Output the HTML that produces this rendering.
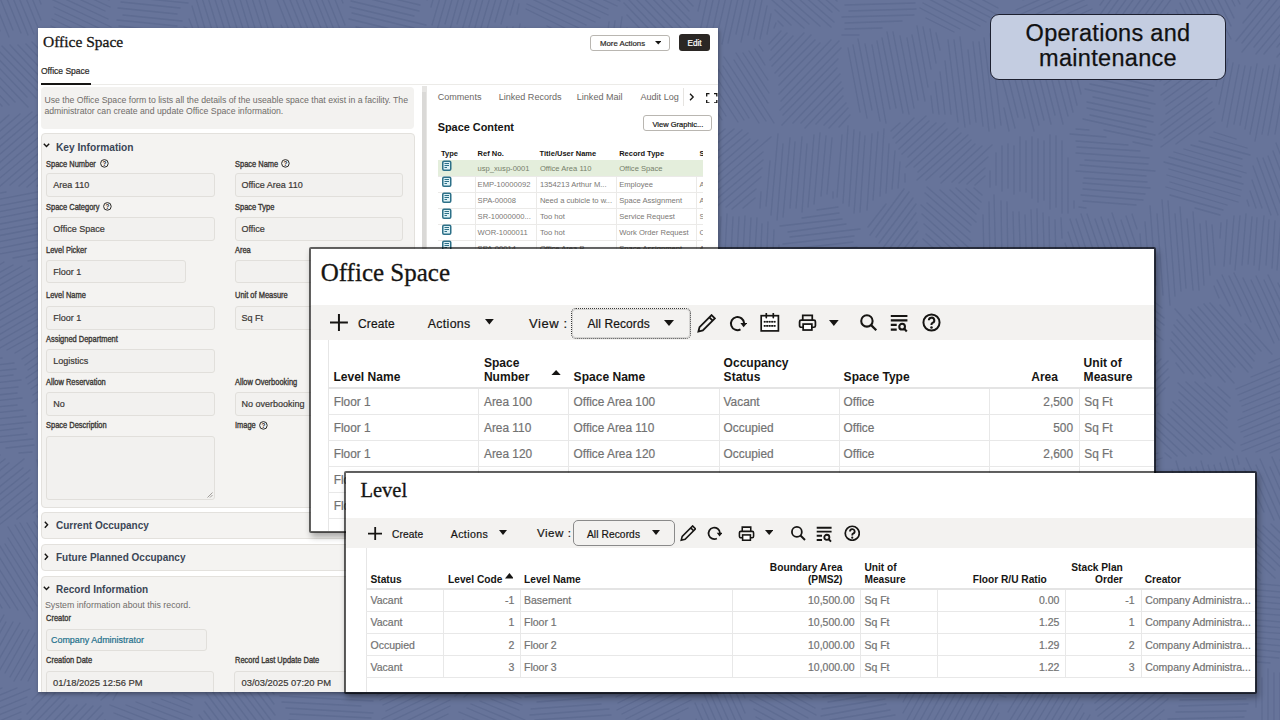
<!DOCTYPE html>
<html><head><meta charset="utf-8">
<style>
*{box-sizing:border-box;margin:0;padding:0}
html,body{width:1280px;height:720px;overflow:hidden}
body{background:#67749a;font-family:"Liberation Sans",sans-serif;position:relative;color:#161513}
.a{position:absolute;white-space:nowrap}
#tbox{left:990px;top:14px;width:236px;height:66px;background:#c4cde1;border:1px solid #1d2030;border-radius:9px;text-align:center;font-size:23.5px;line-height:24.5px;padding-top:6px;color:#111;letter-spacing:0.3px;-webkit-text-stroke:0.25px #111}
.win{position:absolute;background:#fff;overflow:hidden}
#w1{left:38px;top:28px;width:680px;height:664px;box-shadow:1px 2px 4px rgba(0,0,0,.35)}
#w2{left:309px;top:247px;width:847px;height:286px;border:2px solid rgba(0,0,0,.6);background-clip:padding-box;border-radius:2px;box-shadow:2px 4px 6px rgba(0,0,0,.3)}
#w3{left:344px;top:471px;width:913px;height:223px;border:2px solid rgba(0,0,0,.62);background-clip:padding-box;border-radius:2px;box-shadow:2px 4px 6px rgba(0,0,0,.3)}
.inp{background:#f2f1ef;border:1px solid #e2e0dc;border-radius:3px}
.card{background:#f4f3f1;border:1px solid #e6e4e0;border-radius:4px}

</style></head><body>
<svg class="a" style="left:0;top:0" width="1280" height="720"><path d="M32 -19L41 4M22 -26L41 20M15 -29L41 35M9 -26L34 34M-0 -34L28 35M-8 -38L21 33M-11 -29L13 30M-19 -31L9 37M-23 -26L0 31M-27 -20L-6 30M-31 -14L-11 34M-35 -9L-18 34M-42 -8L-23 38M-44 2L-29 38M-44 17L-35 39M-44 34L-41 41M97 -26L104 -23M90 -22L106 -15M79 -21L107 -8M72 -18L109 -0M63 -15L110 7M53 -13L105 11M46 -10L108 19M49 -2L111 27M54 7L116 36M55 14L109 39M52 19L109 46M51 26L95 46M51 32L88 49M52 39L75 50M52 46L68 53M163 -30L189 -27M135 -26L187 -21M115 -22L183 -15M115 -16L179 -10M117 -10L186 -3M117 -4L188 3M121 2L180 8M118 8L177 14M123 15L182 21M117 20L177 26M119 26L163 31M122 33L148 35M122 39L137 40M123 45L127 45M263 -27L270 -4M257 -25L279 45M253 -20L271 38M244 -27L266 42M240 -20L259 41M233 -24L253 42M226 -24L247 41M219 -28L241 41M212 -29L231 31M204 -35L227 37M201 -25L219 33M197 -18L213 33M195 -5L206 32M192 6L200 33M189 19L193 29M332 -40L337 -29M326 -39L343 3M323 -31L345 25M313 -38L344 39M307 -37L341 47M305 -28L337 52M295 -36L331 53M288 -37L324 53M284 -31L317 52M278 -30L309 47M273 -25L301 43M276 -3L296 48M281 25L290 47M363 -46L411 -34M346 -44L409 -28M339 -39L413 -21M350 -30L410 -16M340 -27L415 -8M346 -19L413 -3M344 -13L420 5M354 -5L419 11M351 1L414 16M350 7L426 25M352 13L414 28M349 19L399 31M356 27L387 34M354 32L377 38M354 38L365 41M519 4L517 14M524 -33L510 15M518 -34L501 24M511 -33L495 22M507 -39L487 29M499 -33L480 31M494 -40L474 31M488 -37L469 27M482 -38L461 34M475 -36L457 24M471 -46L449 33M465 -46L445 24M457 -38L437 30M453 -46L432 25M446 -47L431 7M442 -52L427 0M435 -50L425 -16M427 -45L423 -29M592 -32L612 -22M575 -34L621 -12M556 -36L617 -7M542 -36L620 1M540 -30L617 6M534 -27L608 9M533 -20L608 15M528 -16L600 18M526 -10L595 22M526 -4L586 25M527 4L579 28M526 9L577 34M547 26L568 36M689 -33L696 -26M683 -30L694 -19M679 -26L695 -9M673 -24L694 -1M664 -24L693 6M661 -19L689 11M652 -19L690 20M648 -14L693 32M647 -7L688 35M634 -12L685 41M627 -10L692 56M628 -1L679 52M624 3L676 57M627 15L669 59M776 23L774 28M771 14L767 34M767 6L760 39M763 -5L754 39M759 -15L748 35M755 -22L741 42M752 -39L736 34M746 -37L728 43M739 -35L722 44M735 -42L716 40M728 -40L709 47M722 -40L702 49M716 -42L696 50M709 -36L698 11M703 -39L700 -23M813 -60L841 -35M805 -59L838 -30M797 -58L839 -21M791 -55L839 -13M778 -59L834 -10M777 -52L837 1M767 -52L839 11M761 -50L832 12M759 -43L834 22M767 -29L831 27M765 -22L820 26M768 -12L809 24M772 -0L804 28M775 10L791 25M778 21L783 26M859 35L842 35M882 28L845 29M902 21L845 23M914 15L842 17M916 9L849 11M915 3L845 5M912 -3L844 -1M915 -9L854 -7M910 -15L847 -13M906 -21L845 -19M911 -27L855 -25M904 -33L852 -31M911 -39L849 -37M910 -45L862 -44M907 -51L880 -50M904 -57L898 -57M997 -33L1008 -27M981 -35L1008 -20M969 -34L1004 -16M953 -36L1002 -10M933 -40L1005 -2M924 -38L994 -1M927 -30L998 8M923 -25L1005 19M928 -15L999 22M919 -13L986 22M927 -2L980 26M923 3L975 30M920 8L960 29M926 18L954 32M1092 42L1087 44M1092 35L1079 41M1092 29L1071 38M1090 23L1065 34M1089 17L1059 30M1092 9L1048 29M1087 5L1042 25M1095 -5L1030 24M1085 -8L1028 18M1096 -19L1019 15M1091 -23L1016 10M1085 -28L1023 0M1097 -39L1013 -2M1093 -44L1023 -13M1087 -48L1021 -18M1082 -52L1015 -22M1042 -41L1013 -28M1168 23L1155 42M1168 13L1149 40M1175 -6L1141 40M1174 -15L1132 43M1180 -33L1124 44M1172 -32L1119 40M1166 -35L1111 41M1159 -36L1102 43M1151 -35L1105 29M1150 -44L1100 25M1143 -44L1099 16M1136 -45L1100 5M1130 -46L1101 -6M1123 -47L1103 -20M1117 -49L1103 -29M1109 -48L1102 -39M1249 -45L1253 -38M1240 -50L1250 -30M1232 -53L1246 -26M1227 -48L1243 -18M1222 -46L1243 -4M1217 -41L1240 4M1212 -39L1235 6M1206 -38L1234 18M1198 -40L1231 26M1193 -36L1231 39M1187 -35L1224 39M1189 -18L1224 52M1181 -20L1218 53M1180 -10L1213 56M1180 3L1205 53M1176 10L1198 52M1175 20L1189 48M1171 27L1180 45M1169 36L1172 42M1312 52L1307 59M1317 37L1300 57M1317 27L1295 55M1320 14L1285 57M1315 11L1277 57M1319 -4L1277 47M1322 -16L1264 54M1319 -22L1256 54M1310 -20L1254 47M1305 -24L1242 52M1293 -20L1242 43M1290 -25L1236 41M1285 -28L1243 23M1280 -32L1247 8M1274 -34L1248 -2M1269 -38L1251 -15M1262 -38L1254 -29M41 42L51 53M32 42L52 62M26 44L51 70M18 45L46 74M10 45L42 79M2 46L43 88M-7 45L37 90M-14 46L36 98M-21 47L27 97M-24 53L28 107M-31 54L15 102M-45 49L9 105M-47 54L2 106M-49 61L-4 108M-50 69L-12 108M-42 86L-20 109M-38 99L-25 113M111 49L122 50M81 55L119 56M65 60L124 62M65 66L125 68M65 72L129 74M55 78L122 80M57 84L131 86M56 90L130 92M56 96L126 98M58 102L136 104M61 108L123 110M99 115L123 116M184 27L187 28M177 31L191 36M169 35L195 43M160 39L195 50M149 41L195 56M143 46L192 61M139 51L198 70M130 54L195 75M138 63L194 81M137 69L193 87M140 76L198 95M135 81L197 101M144 90L192 105M138 95L188 110M142 102L181 115M280 51L277 60M274 51L266 77M266 55L255 94M261 52L247 102M255 51L241 99M249 48L233 106M242 53L228 104M236 52L222 100M231 48L215 104M224 50L209 103M218 50L206 91M213 43L203 81M207 44L201 64M202 40L199 49M331 61L339 69M323 61L340 77M310 57L342 88M302 58L339 93M289 53L342 105M291 63L338 109M282 63L332 112M279 69L324 113M274 72L326 123M271 77L317 123M269 84L311 125M271 94L306 129M263 94L309 139M260 100L297 137M260 108L299 147M256 113L289 145M264 130L287 152M279 153L284 158M433 34L438 45M424 30L436 55M421 37L434 64M414 36L431 71M408 37L428 80M405 45L429 95M396 41L428 108M394 50L425 115M383 41L414 106M380 49L408 108M375 51L404 114M365 46L395 108M359 47L388 108M357 56L381 106M352 59L376 111M346 60L366 103M345 72L361 107M348 94L354 107M473 40L487 49M463 41L487 56M453 42L492 66M443 43L492 72M450 55L500 85M448 60L502 92M444 65L501 99M445 72L499 105M444 79L500 112M443 85L493 115M439 90L489 119M438 96L483 123M435 102L479 127M435 109L472 130M436 116L463 132M435 122L459 137M443 134L455 141M576 89L573 105M572 76L566 110M568 62L560 109M564 50L553 112M558 49L546 118M553 44L540 116M548 38L536 109M543 31L528 115M536 36L524 103M531 31L518 108M525 28L512 107M520 24L509 89M513 27L504 80M507 27L500 67M500 32L496 57M494 36L491 48M675 72L671 100M669 70L664 110M664 65L658 110M659 60L652 110M654 51L646 110M648 49L640 109M642 45L634 109M637 37L628 107M632 31L622 106M627 28L616 105M622 17L610 104M615 21L604 104M609 22L599 99M601 36L592 102M596 30L587 97M590 33L582 88M583 36L578 75M576 41L574 57M759 45L763 51M755 49L765 65M749 51L768 80M743 53L769 93M736 53L768 103M734 60L774 123M724 57L766 121M723 66L759 123M716 66L749 118M709 66L744 120M699 62L738 122M696 68L726 116M690 69L722 120M684 71L713 116M683 81L705 115M680 87L698 116M679 97L691 116M675 103L684 115M850 115L839 127M848 108L829 128M846 103L824 125M843 96L816 124M843 88L805 128M841 82L801 123M840 74L793 123M837 68L782 125M838 59L783 115M841 48L780 110M839 41L781 101M831 40L779 94M820 43L779 85M815 40L779 76M811 35L775 73M804 33L772 66M793 36L770 60M787 33L771 50M781 31L769 44M936 33L940 50M930 29L936 63M923 27L931 69M917 26L928 87M912 35L925 101M907 38L918 100M900 36L914 108M893 32L909 114M887 32L903 113M882 38L896 108M877 41L890 109M872 45L886 123M865 44L880 121M858 39L872 110M853 45L867 118M848 48L860 112M990 34L1001 125M984 38L995 128M979 42L989 131M973 42L983 126M968 50L976 122M960 37L970 124M954 40L965 127M948 40L958 122M945 61L951 114M940 72L945 114M935 82L939 114M931 96L933 113M1088 49L1089 55M1081 47L1086 67M1075 47L1083 78M1069 47L1081 94M1061 41L1077 105M1055 40L1073 112M1050 48L1068 116M1040 32L1063 124M1036 41L1055 115M1029 36L1051 124M1021 30L1044 120M1016 36L1039 125M1008 26L1034 131M1002 29L1025 118M999 40L1018 117M995 51L1015 128M1004 108L1009 131M1146 47L1156 49M1125 49L1155 55M1099 49L1149 60M1097 55L1150 66M1097 61L1156 74M1093 66L1156 80M1091 72L1154 86M1092 78L1153 91M1090 84L1148 96M1085 89L1155 104M1093 97L1150 109M1087 102L1153 116M1087 108L1153 122M1090 115L1146 127M1083 119L1155 135M1104 130L1152 140M1133 142L1152 146M1215 122L1199 134M1211 118L1176 144M1214 109L1161 147M1212 102L1164 138M1207 98L1159 134M1212 88L1161 125M1208 83L1166 114M1204 79L1166 106M1205 70L1164 100M1205 63L1161 95M1200 59L1164 85M1193 57L1160 81M1186 54L1161 73M1179 52L1160 66M1174 48L1162 57M1167 46L1161 51M1314 85L1311 103M1310 77L1302 116M1306 65L1294 127M1300 66L1288 128M1294 63L1282 130M1287 66L1275 134M1281 65L1268 135M1275 65L1262 134M1269 66L1255 141M1263 69L1250 134M1257 64L1245 129M1251 67L1240 125M1245 66L1234 124M1239 65L1227 127M1233 63L1222 121M1228 59L1219 104M1221 61L1216 86M1215 62L1214 67M59 183L56 186M56 178L46 186M56 170L37 186M53 165L27 187M50 159L19 186M48 153L10 185M45 148L-1 187M43 142L-6 183M40 136L-22 189M35 132L-25 184M41 119L-36 185M37 115L-36 177M32 112L-40 173M20 114L-35 161M9 115L-43 160M-1 116L-43 151M-9 115L-39 141M-21 117L-37 131M116 121L119 128M110 123L118 139M102 121L115 148M95 119L113 157M90 123L110 165M83 122L111 182M74 117L107 186M69 121L101 187M61 117L91 181M51 111L87 187M50 123L77 180M55 147L75 189M60 171L67 187M158 117L180 128M142 115L180 135M138 120L179 141M132 123L174 145M125 126L180 155M127 134L177 160M125 140L174 166M124 146L177 174M123 153L177 181M122 159L180 189M119 164L174 193M118 170L161 193M116 176L157 197M117 183L147 199M114 188L138 201M280 162L280 175M274 157L273 190M268 147L267 195M262 137L261 195M256 127L255 202M250 126L249 198M244 117L243 193M238 118L237 198M232 112L231 194M226 112L225 201M220 122L219 193M214 122L213 195M208 111L207 205M202 115L201 201M196 126L195 199M190 121L189 193M345 115L352 115M339 120L352 121M331 126L353 127M327 132L357 133M321 138L354 139M314 143L360 145M310 149L356 151M298 155L366 158M298 161L361 163M288 166L364 169M288 172L362 175M288 178L374 182M283 184L373 188M302 191L370 194M315 197L359 199M332 204L361 205M445 170L438 175M443 164L420 179M443 157L406 181M441 152L388 185M440 145L382 181M438 139L380 176M429 138L384 166M431 130L380 161M426 125L374 158M421 121L377 149M412 120L371 146M399 121L367 141M391 119L364 136M383 117L364 129M374 116L361 124M365 114L358 118M540 124L546 131M529 121L544 139M521 120L542 145M509 115L539 152M505 120L542 164M504 128L538 168M499 131L541 181M492 132L536 185M486 134L535 193M484 142L534 201M480 146L530 205M474 147L522 206M464 146L518 210M461 152L511 211M452 149L492 197M455 162L482 195M452 168L464 183M621 117L631 122M585 109L624 125M578 112L627 133M574 118L619 136M569 122L621 143M562 126L612 146M553 128L614 154M552 134L616 161M551 140L611 165M549 146L605 169M552 154L605 176M550 159L604 182M554 167L601 187M552 173L600 193M551 179L594 197M548 185L595 204M550 192L588 208M549 198L565 205M668 115L675 121M662 117L676 130M653 117L678 141M650 122L677 148M643 124L680 160M637 126L681 170M636 134L680 177M636 142L677 181M634 148L675 189M630 153L666 188M627 158L661 192M622 162L652 191M618 166L649 196M617 174L640 196M614 179L634 199M611 185L630 203M609 191L623 204M607 198L616 207M603 202L610 209M601 209L605 212M755 198L743 208M756 189L732 209M761 177L726 207M762 168L715 208M763 160L707 207M763 152L710 197M771 137L702 196M758 140L706 185M750 139L698 184M748 133L694 178M742 130L693 172M734 129L689 167M725 129L687 161M717 127L689 152M709 126L688 144M702 125L685 139M695 123L682 134M688 121L680 127M833 192L833 198M832 138L827 194M826 136L821 196M820 133L814 204M814 135L808 207M807 144L802 212M802 137L796 208M795 142L790 208M790 138L783 217M783 144L777 220M778 134L771 215M770 161L766 206M761 192L760 208M905 174L905 182M900 162L898 188M895 151L892 189M889 144L886 193M884 129L880 196M878 132L873 200M872 134L867 210M865 136L860 212M860 132L854 213M854 130L849 206M848 126L843 203M842 135L837 197M985 176L975 185M985 168L967 184M988 157L959 183M992 145L952 182M982 146L941 183M975 144L940 177M971 140L926 180M968 135L917 180M961 133L918 172M958 128L914 167M947 129L906 167M945 123L908 157M936 123L902 154M929 121L899 149M926 116L896 143M914 118L893 138M900 123L891 131M1074 201L1074 208M1068 158L1068 213M1062 141L1062 213M1056 136L1056 207M1050 135L1050 209M1044 141L1044 200M1038 139L1038 202M1032 137L1032 198M1026 141L1026 192M1020 137L1020 191M1014 146L1014 194M1008 144L1008 188M1002 146L1002 191M996 153L996 185M990 171L990 187M1076 129L1089 130M1070 134L1106 137M1076 141L1128 145M1077 147L1140 151M1076 153L1149 158M1085 160L1148 164M1080 165L1155 171M1076 171L1146 176M1084 178L1147 182M1083 183L1150 188M1083 189L1145 194M1081 195L1143 200M1083 201L1136 205M1079 207L1086 208M1214 132L1236 139M1210 137L1247 148M1199 141L1250 155M1191 145L1242 159M1184 149L1242 166M1174 152L1246 173M1169 157L1241 177M1164 162L1243 184M1169 169L1241 190M1167 175L1240 196M1170 182L1238 202M1166 187L1227 205M1170 195L1223 210M1195 208L1220 215M1323 182L1325 188M1300 139L1318 186M1294 139L1314 192M1287 137L1308 194M1284 146L1307 207M1276 143L1301 207M1273 151L1298 217M1268 156L1292 219M1263 158L1284 213M1257 158L1278 215M1253 166L1271 215M1252 180L1262 208M1250 191L1256 208M1247 200L1249 206M39 259L28 261M39 253L13 258M40 247L-1 254M41 240L-20 252M45 233L-23 246M39 228L-34 242M43 222L-34 236M53 214L-37 231M49 208L-38 225M55 201L-43 220M56 195L-34 212M53 189L-41 207M6 192L-45 202M-31 193L-41 195M112 261L45 262M114 255L51 256M121 249L53 250M114 243L59 244M120 237L52 238M116 231L64 232M121 225L57 226M121 219L64 220M123 213L62 214M125 206L63 208M118 201L64 202M102 195L64 196M187 291L184 293M189 279L176 294M191 267L169 292M193 256L161 293M193 247L156 290M199 231L148 290M205 215L148 280M196 216L144 276M195 208L142 270M191 203L134 269M186 200L127 268M175 204L125 261M169 202L127 249M157 206L128 239M150 204L132 226M140 207L131 217M221 303L206 304M224 297L199 298M228 291L190 292M238 285L196 286M240 279L195 280M250 272L199 274M255 266L203 268M259 260L205 262M267 254L204 256M269 248L209 250M263 242L204 244M258 236L210 238M263 230L213 231M262 224L215 225M261 218L217 219M262 212L216 213M353 215L356 218M343 211L360 233M333 208L361 245M324 206L366 260M315 205L364 268M311 209L357 268M299 203L350 269M291 202L349 278M278 196L339 274M275 201L335 279M277 214L321 271M269 213L317 276M273 228L307 272M272 236L297 270M276 252L286 265M417 275L412 278M418 267L405 276M420 259L397 273M424 250L392 269M424 243L385 266M422 237L380 262M426 228L379 256M427 220L379 249M426 213L369 248M435 201L371 240M437 193L367 235M432 189L363 230M437 179L370 219M419 183L362 217M397 189L367 207M384 190L378 194M501 212L514 227M480 198L511 233M464 189L508 238M449 181L510 250M445 185L503 251M450 200L493 248M446 205L489 253M440 208L487 260M443 220L477 258M438 223L474 263M439 233L467 265M433 236L464 271M432 243L460 275M430 250L456 279M426 255L449 280M426 264L444 284M423 269L440 289M422 277L434 290M625 265L626 276M618 254L620 276M611 242L615 280M604 224L608 278M597 222L603 280M591 217L597 290M585 214L591 283M579 222L585 290M573 221L579 290M567 215L573 288M560 211L567 292M554 211L561 293M548 214L556 295M543 219L550 295M537 218L543 284M531 218L536 277M525 224L529 266M520 236L522 257M683 192L693 196M675 195L699 205M666 198L701 212M660 202L698 217M647 203L695 222M642 208L693 228M636 212L693 235M629 216L685 238M620 218L688 246M613 222L688 252M619 231L678 254M616 236L678 261M625 246L683 269M631 255L677 273M629 261L677 280M636 270L670 284M784 268L784 279M779 245L778 275M774 230L772 274M768 222L766 279M762 224L760 270M757 218L754 270M751 218L748 273M745 216L742 275M739 217L736 276M733 217L730 273M727 214L724 274M721 217L718 272M714 222L712 272M708 224L706 272M702 236L700 275M695 253L694 273M688 265L688 277M837 286L833 287M840 280L816 283M842 273L796 279M850 266L796 273M858 259L796 267M863 253L795 261M857 247L791 255M853 242L792 249M854 236L783 244M860 229L790 237M846 224L788 232M842 219L780 226M839 213L802 218M838 207L817 210M919 249L913 257M917 241L907 255M918 231L899 255M917 222L896 250M916 213L887 252M916 204L883 248M913 198L879 243M909 192L876 237M904 189L870 235M886 204L868 227M974 188L982 195M966 189L981 202M956 188L979 209M950 190L976 214M940 190L976 222M927 187L971 225M925 193L970 232M927 203L971 241M921 205L969 248M922 214L969 256M924 224L965 260M926 234L957 261M923 239L951 264M925 249L945 267M923 255L938 268M1061 218L1062 238M1055 220L1056 260M1049 217L1050 274M1043 213L1045 278M1037 209L1038 274M1031 210L1033 277M1025 215L1027 277M1019 212L1021 276M1013 212L1015 284M1007 202L1008 269M1001 201L1002 266M994 195L996 274M989 202L990 266M983 215L984 260M978 248L978 262M1132 214L1137 229M1126 216L1136 245M1121 220L1136 265M1112 213L1135 281M1108 219L1127 276M1101 217L1122 278M1095 219L1118 285M1087 214L1108 275M1081 214L1102 276M1076 219L1098 285M1070 219L1092 285M1068 232L1086 284M1065 243L1079 285M1063 253L1073 285M1059 263L1065 279M1057 273L1058 277M1212 225L1215 265M1206 221L1210 275M1200 224L1204 285M1193 212L1199 290M1187 219L1193 290M1180 207L1186 288M1175 214L1181 291M1168 201L1175 296M1162 200L1170 305M1157 214L1163 295M1150 206L1156 285M1145 222L1150 282M1140 234L1144 286M1302 263L1302 270M1297 250L1296 267M1293 232L1290 267M1287 225L1284 267M1281 223L1277 270M1275 221L1272 268M1269 220L1266 265M1264 216L1259 270M1257 218L1254 265M1252 217L1248 264M1246 214L1242 265M1240 216L1235 270M1234 216L1230 264M1227 220L1224 266M1221 223L1220 238M44 336L15 353M45 329L7 350M41 324L-5 351M38 319L-8 345M36 313L-10 340M36 307L-13 335M37 299L-12 327M42 289L-18 324M36 286L-24 320M33 280L-20 311M31 275L-25 307M30 268L-22 298M22 266L-26 294M13 265L-33 291M4 262L-36 286M-6 261L-39 280M-16 260L-35 271M-22 257L-35 264M55 270L122 271M53 276L122 277M48 282L126 283M55 288L132 289M58 294L128 295M51 300L136 301M57 306L128 307M53 312L129 313M55 318L119 319M56 324L117 325M58 330L117 331M56 336L113 337M75 342L111 343M96 349L112 349M203 390L193 394M205 383L187 390M213 373L183 386M214 366L174 383M216 359L170 378M228 347L160 376M226 341L160 369M216 339L148 368M222 330L148 361M214 327L139 358M205 324L140 352M200 320L132 349M207 310L119 347M194 309L133 335M194 303L132 329M186 300L135 321M171 299L138 313M151 301L141 306M287 275L279 317M281 273L271 332M276 264L265 331M271 258L258 334M263 270L252 337M256 273L246 335M250 277L239 337M242 285L233 339M234 296L229 327M227 304L223 324M220 308L219 317M345 285L348 298M339 286L344 311M333 287L340 324M327 288L336 333M322 291L332 343M316 290L327 353M308 285L320 346M302 282L314 348M295 279L309 352M292 292L303 354M288 304L297 353M284 319L290 352M280 328L283 346M276 339L277 345M417 284L432 296M402 280L431 303M390 277L433 313M378 276L430 318M368 275L435 330M366 282L428 332M358 283L431 342M357 289L423 343M361 301L422 350M359 307L408 346M351 308L398 346M350 315L391 349M347 320L386 352M347 328L376 351M347 335L370 354M341 339L362 356M341 346L353 356M339 352L346 358M535 286L543 304M517 261L537 307M510 261L534 315M505 264L534 328M500 267L532 338M493 267L527 342M492 279L525 353M485 278L515 345M481 285L510 349M475 286L505 352M469 287L498 350M463 288L491 351M456 288L485 352M452 292L475 343M447 296L470 347M442 301L463 345M440 311L453 340M442 329L447 340M598 378L582 387M598 371L577 383M598 364L573 379M599 356L570 374M595 351L559 373M594 345L556 368M593 338L552 364M590 334L542 363M589 327L539 358M596 316L533 354M594 310L541 342M592 304L536 339M584 302L542 328M573 302L541 321M561 302L546 311M551 301L547 304M666 287L671 289M636 281L671 295M629 285L670 301M620 288L675 310M620 294L678 317M607 295L676 323M607 302L678 330M601 306L673 335M608 315L665 338M605 321L662 343M601 325L653 346M606 334L647 350M607 341L641 355M606 347L632 357M606 353L624 361M603 358L618 364M603 365L612 369M732 353L716 355M751 344L708 350M760 337L699 346M761 330L701 339M760 325L695 334M768 317L688 329M761 312L685 324M762 306L687 317M772 298L687 311M773 292L686 305M776 286L688 299M755 283L677 294M723 281L675 289M693 280L681 282M834 347L816 362M844 331L811 358M841 326L807 353M844 316L799 352M836 314L795 348M835 308L793 342M832 302L783 341M828 298L777 339M829 289L769 338M817 291L776 325M810 289L774 318M802 288L779 307M798 283L783 296M791 282L786 285M917 334L909 345M924 316L905 341M927 302L897 341M934 284L894 335M933 275L884 337M924 277L879 335M921 271L875 330M913 272L870 327M910 266L867 320M904 264L859 321M899 261L856 315M889 264L854 308M884 260L847 307M877 259L848 296M873 255L841 295M985 272L1016 293M967 268L1014 299M967 275L1011 304M958 276L1007 308M949 277L1005 314M946 283L1006 322M942 287L1011 333M943 295L1008 338M938 299L1000 340M936 305L1002 348M937 312L990 348M929 314L984 351M931 323L977 353M931 330L965 353M925 334L957 355M920 337L954 360M922 346L945 361M916 349L937 363M921 360L930 365M1042 284L1068 287M1028 288L1079 295M1025 293L1076 301M1019 299L1072 306M1022 305L1073 312M1023 311L1076 319M1021 317L1076 325M1019 323L1080 332M1024 330L1081 338M1019 335L1076 343M1018 341L1080 350M1023 348L1083 356M1019 353L1076 361M1023 360L1081 368M1032 367L1078 374M1044 375L1072 379M1068 384L1073 385M1139 290L1162 308M1129 289L1164 318M1120 290L1164 325M1114 292L1160 330M1107 295L1163 340M1095 292L1157 342M1087 294L1149 344M1091 305L1141 345M1085 307L1132 345M1091 320L1125 348M1089 326L1122 352M1088 333L1116 355M1089 342L1107 356M1088 349L1101 359M1089 357L1096 362M1245 324L1272 354M1220 305L1261 351M1210 303L1255 354M1204 304L1254 361M1198 307L1252 368M1191 309L1248 372M1189 315L1235 367M1175 309L1231 372M1177 320L1234 383M1174 325L1225 382M1172 332L1211 376M1171 340L1205 378M1170 348L1193 374M1176 363L1184 373M1310 278L1314 288M1302 276L1311 296M1295 276L1310 308M1290 279L1309 318M1284 279L1310 335M1278 283L1307 343M1268 275L1300 342M1264 280L1292 340M1256 276L1285 338M1251 280L1279 340M1243 278L1274 343M1234 273L1261 329M1229 276L1251 322M1222 275L1241 316M1217 280L1230 306M1214 286L1219 298M32 452L19 453M34 445L6 448M33 439L-6 443M27 434L-24 439M23 428L-39 435M31 422L-39 429M26 416L-45 423M23 410L-43 417M17 405L-37 410M22 398L-42 405M17 393L-41 399M18 387L-35 392M21 380L-33 386M13 375L-35 380M16 369L-32 374M14 363L-22 367M2 358L-17 360M92 413L64 432M93 405L44 439M90 400L41 434M96 388L46 423M97 380L43 417M102 369L37 414M103 362L41 404M97 358L32 403M95 353L33 395M87 351L31 389M74 352L28 384M72 347L26 378M64 345L28 370M57 342L25 365M48 341L22 359M200 430L191 438M197 425L181 439M196 418L171 440M197 409L163 438M191 407L150 442M190 399L141 442M180 400L133 442M172 399L131 435M167 395L125 432M163 391L123 426M164 382L115 425M157 380L112 419M151 377L107 416M145 375L102 412M138 373L105 402M132 370L103 395M128 365L104 387M126 360L107 376M119 358L108 367M114 354L109 358M279 422L273 429M279 414L258 437M278 405L248 440M280 394L241 438M279 386L236 434M284 371L224 440M280 367L223 431M276 362L208 440M278 351L210 428M265 356L213 415M262 350L208 412M254 351L203 409M250 346L205 398M240 348L219 373M234 346L231 350M334 358L340 364M326 357L341 374M322 362L342 385M310 357L345 397M308 363L345 407M297 360L354 425M301 373L355 436M292 373L351 440M295 385L337 434M294 393L326 430M288 395L317 429M290 406L308 428M287 412L301 428M284 418L291 426M426 355L429 365M421 358L426 379M415 359L424 394M410 363L422 410M403 359L418 419M398 366L413 423M390 360L409 432M386 369L401 424M379 362L396 429M372 360L391 434M368 368L385 436M362 370L378 431M354 363L372 435M349 367L368 443M352 403L362 442M489 446L470 453M493 438L464 448M492 433L456 445M494 425L452 440M494 419L444 436M498 411L440 431M500 405L427 429M497 399L434 420M502 391L429 416M506 384L433 408M500 379L429 403M504 371L435 395M508 364L435 388M496 361L432 383M481 360L431 377M477 355L436 369M467 352L433 364M456 350L434 357M449 346L438 349M539 466L533 467M549 459L526 461M564 452L519 456M577 444L508 451M588 437L498 446M593 431L511 439M592 425L511 433M590 419L504 427M588 413L515 420M589 407L514 414M585 402L516 408M578 396L509 403M575 390L509 397M568 385L509 391M557 380L515 384M552 375L512 378M540 370L514 372M534 364L515 366M683 341L689 358M677 343L686 366M673 348L682 373M667 349L678 379M661 351L674 384M655 353L671 394M651 358L667 401M647 364L663 407M640 364L659 413M636 370L656 423M631 373L649 420M623 370L646 429M620 377L639 428M612 375L634 431M608 381L625 425M604 386L620 429M598 388L613 427M594 394L607 429M596 416L603 433M741 409L730 425M738 403L719 430M731 403L704 440M732 391L689 450M727 388L686 444M726 379L679 443M720 377L680 432M722 365L671 434M715 364L668 428M707 365L662 426M701 362L672 402M700 354L688 371M817 425L800 434M818 417L785 435M813 413L780 431M814 406L773 428M810 401L766 425M813 393L764 419M810 388L761 414M813 379L750 413M807 376L751 406M810 367L744 403M798 367L748 394M794 362L741 391M787 359L744 382M781 355L739 378M773 353L736 373M769 348L729 370M762 345L731 362M866 428L834 432M889 419L832 426M916 410L832 420M913 404L837 413M912 398L824 409M907 393L827 402M913 386L824 397M914 380L824 391M916 374L830 384M914 368L831 378M903 363L829 372M913 356L835 365M905 351L832 360M889 347L839 353M879 342L842 346M865 337L847 340M1009 352L1021 367M1002 354L1019 375M996 356L1016 381M991 359L1011 384M984 361L1009 391M980 364L1007 398M973 365L1001 401M964 364L995 403M960 368L991 406M955 372L992 418M946 371L984 417M937 368L982 424M937 379L981 432M925 372L970 429M925 382L960 426M924 391L947 420M923 399L939 418M921 406L930 417M1064 463L1057 464M1067 456L1041 460M1067 450L1021 457M1075 443L1008 453M1078 436L999 448M1081 430L995 443M1078 424L992 437M1077 418L995 431M1071 413L993 425M1066 408L1003 417M1066 402L1002 411M1073 394L1008 405M1061 390L1015 397M1052 385L1020 390M1045 380L1022 384M1033 376L1026 377M1149 421L1143 426M1158 404L1136 426M1165 388L1128 425M1169 377L1121 423M1168 369L1111 424M1168 361L1110 417M1161 359L1098 420M1156 356L1098 412M1155 348L1096 405M1144 351L1089 404M1129 357L1083 402M1115 362L1082 394M1103 365L1080 388M1091 368L1084 375M1218 387L1230 398M1205 383L1230 406M1195 382L1227 412M1186 382L1227 420M1178 383L1227 428M1179 392L1235 443M1179 400L1233 450M1173 402L1221 447M1171 409L1214 449M1168 414L1211 454M1158 413L1202 454M1158 421L1193 453M1152 424L1186 456M1151 431L1177 456M1165 453L1171 458M1301 447L1287 453M1301 440L1270 453M1301 434L1256 452M1300 428L1242 451M1299 422L1241 445M1295 417L1244 437M1303 407L1241 432M1301 401L1239 427M1299 396L1238 420M1303 388L1243 412M1300 383L1242 406M1299 376L1240 401M1301 369L1238 395M1299 363L1236 389M1298 358L1251 377M1295 352L1269 363M37 510L33 513M37 503L17 519M32 499L-1 525M32 492L-3 520M32 483L-13 520M29 478L-19 516M30 470L-21 511M23 468L-31 511M24 459L-33 505M9 463L-44 506M5 459L-50 503M-0 455L-47 493M-7 453L-44 483M-13 451L-44 475M-17 446L-43 467M-24 444L-41 458M-31 442L-39 449M120 443L123 459M113 437L118 467M106 435L114 477M97 422L110 488M91 422L105 491M86 425L99 493M80 429L93 490M75 431L87 493M70 440L82 498M65 442L76 499M58 441L70 500M52 442L63 497M47 446L58 502M41 449L51 498M37 460L46 502M203 471L197 491M203 448L188 501M197 447L181 504M190 449L171 520M182 455L161 534M179 444L158 521M170 456L151 527M166 445L145 523M158 452L141 518M152 452L137 509M147 447L132 503M140 450L126 503M134 451L120 501M119 484L114 500M292 502L295 517M283 492L290 522M276 487L284 523M267 475L279 528M260 471L276 541M250 454L269 536M243 452L264 544M238 457L255 529M233 460L248 526M225 452L241 522M218 450L232 512M214 457L226 511M209 463L218 502M206 475L210 496M322 505L302 506M344 498L297 500M344 492L297 494M347 485L287 489M352 479L281 483M346 473L284 477M357 467L276 471M356 461L275 465M352 455L274 459M350 449L256 454M343 444L258 448M318 439L262 442M305 434L271 435M285 429L281 429M459 454L462 460M450 451L458 466M439 443L456 475M431 441L455 485M422 437L452 493M416 438L449 500M413 445L447 509M406 444L440 509M398 444L431 504M393 445L428 511M389 451L420 509M383 453L415 512M374 449L405 506M369 453L397 505M365 458L394 511M365 471L386 510M360 474L380 511M360 486L373 511M357 493L365 509M537 506L534 513M535 492L528 513M533 481L520 517M530 471L513 518M525 469L508 516M518 470L498 524M511 471L493 521M507 464L484 527M501 463L480 521M495 462L471 528M490 460L465 528M483 461L459 528M478 457L454 522M470 462L455 503M596 439L605 448M593 444L609 462M585 445L614 475M582 451L618 488M577 454L616 494M571 456L612 499M563 457L610 505M565 467L603 507M557 468L599 512M549 468L598 519M545 472L585 515M543 479L575 513M539 483L564 509M540 493L554 507M540 502L544 507M648 434L679 449M637 436L689 460M629 439L683 464M614 439L686 472M607 442L692 481M613 452L690 487M622 462L695 496M622 469L685 498M621 475L682 503M622 482L680 509M623 489L655 504M738 423L754 425M732 429L765 432M724 434L778 439M722 440L781 445M709 445L771 450M701 450L766 456M694 455L769 462M699 462L767 468M702 468L771 474M700 474L760 479M696 480L761 486M701 486L760 492M703 492L756 497M705 499L752 503M735 507L754 509M859 519L855 525M857 510L849 525M855 502L843 523M851 496L836 522M850 486L829 522M848 477L825 518M847 466L816 521M842 463L809 522M838 459L804 518M839 445L794 523M834 441L792 516M828 439L781 522M820 441L776 519M812 444L772 513M805 444L769 507M797 446L764 503M792 443L776 471M911 418L920 425M904 421L920 433M899 424L920 440M889 425L919 447M883 428L917 453M877 431L917 461M870 433L918 468M869 440L919 476M860 440L917 483M848 439L922 493M856 452L918 498M856 460L918 505M859 470L920 515M857 476L917 520M862 487L923 531M860 492L918 535M863 503L917 542M864 510L900 537M865 519L886 534M864 526L868 528M984 441L991 459M976 436L987 466M969 434L985 479M962 433L981 485M957 437L976 488M951 437L974 500M940 424L969 505M937 435L968 520M930 432L965 528M927 442L957 522M928 461L949 520M924 469L946 528M925 489L941 531M925 506L935 534M926 525L930 537M1063 477L1065 501M1057 474L1060 510M1051 468L1054 510M1045 469L1048 516M1038 467L1042 513M1032 464L1037 520M1026 464L1031 523M1021 468L1025 520M1014 465L1018 517M1008 463L1013 524M1002 462L1007 523M996 464L1001 527M991 476L995 525M986 487L989 525M981 500L984 532M976 512L977 530M971 525L971 529M1152 512L1147 514M1155 505L1137 511M1157 498L1130 507M1157 492L1120 504M1160 484L1111 501M1160 478L1099 498M1156 473L1086 496M1158 466L1085 490M1162 458L1077 487M1158 453L1071 482M1150 449L1074 475M1145 445L1078 467M1141 440L1071 463M1141 434L1079 454M1125 433L1082 447M1113 430L1082 441M1097 429L1086 433M1237 456L1239 464M1232 459L1238 480M1225 457L1236 493M1220 463L1234 507M1214 465L1229 512M1208 465L1225 520M1201 461L1220 525M1196 467L1215 526M1190 467L1210 531M1184 468L1200 520M1176 461L1195 525M1172 470L1186 517M1169 479L1181 520M1165 487L1174 518M1162 497L1167 514M1159 508L1160 512M1315 465L1329 496M1308 464L1332 516M1303 466L1324 514M1297 467L1321 521M1285 457L1320 534M1280 460L1313 532M1272 457L1301 522M1270 467L1294 521M1260 459L1286 518M1256 465L1281 521M1246 458L1274 520M1244 468L1264 512M1242 477L1258 514M1241 491L1250 511M1240 502L1244 510M37 516L39 519M34 522L52 552M27 523L65 584M20 523L61 589M15 525L53 588M8 527L53 599M8 538L45 597M5 544L44 606M-5 538L37 606M-7 547L33 611M-13 550L31 619M-13 561L18 610M-17 566L10 608M-21 571L2 608M-26 573L-7 604M-29 581L-16 601M-33 585L-25 597M-37 591L-34 594M91 580L71 585M105 571L69 579M118 561L66 574M134 552L64 568M146 542L69 560M153 535L71 554M136 532L60 550M132 527L66 543M134 521L58 538M123 517L52 534M119 512L47 529M110 508L46 523M106 503L51 515M61 507L42 511M190 606L129 620M193 600L124 614M188 595L118 610M185 589L107 606M175 585L109 599M171 580L99 595M177 573L91 591M173 567L96 584M172 561L107 575M169 556L124 565M166 550L135 557M165 544L144 549M161 539L156 540M199 496L207 498M195 501L214 506M193 507L225 514M190 512L231 522M189 518L243 530M180 523L247 537M173 527L251 544M183 536L264 553M177 540L264 560M183 548L263 566M173 552L257 570M182 560L249 575M189 568L236 578M189 574L229 583M191 580L220 587M195 587L216 592M197 594L209 596M347 504L364 529M344 509L365 542M337 510L368 557M332 513L367 566M323 510L366 575M317 513L373 598M317 523L370 604M312 526L363 604M302 523L350 595M302 533L339 590M294 532L332 590M290 537L322 586M285 540L312 582M283 548L306 583M277 550L296 579M275 557L286 575M272 564L277 571M453 529L457 542M443 519L457 560M439 525L456 575M433 528L454 589M426 526L449 594M420 525L442 591M412 522L437 594M408 527L429 589M399 521L426 601M395 527L419 596M389 528L411 593M380 520L404 592M375 522L399 594M370 527L393 597M374 558L389 602M377 587L383 604M532 519L536 531M528 524L539 560M522 526L537 575M517 530L532 578M509 525L529 589M505 532L522 588M500 536L516 589M494 537L511 593M488 538L504 589M483 542L500 597M476 540L494 597M470 540L488 600M466 547L480 595M461 552L474 596M461 573L469 597M460 589L462 596M607 593L598 597M604 588L587 594M604 582L577 592M603 576L572 587M601 570L564 584M604 563L549 583M599 558L545 578M604 550L546 571M598 545L548 564M598 539L549 557M597 533L549 551M594 528L544 547M589 523L545 540M578 521L545 533M568 518L541 529M561 514L541 522M550 512L538 517M623 501L642 505M622 507L676 517M617 512L675 523M616 518L675 529M611 523L670 534M616 530L664 539M612 536L670 546M611 542L664 551M612 548L664 557M615 555L662 563M616 561L666 570M611 566L665 576M613 573L658 581M611 578L655 586M612 585L646 591M611 590L638 595M750 589L731 592M753 583L715 589M756 576L697 586M749 571L684 582M755 564L681 577M747 559L673 572M754 552L678 565M758 545L678 559M757 539L684 552M760 533L688 545M759 527L680 540M758 521L689 533M746 517L680 528M735 513L684 522M720 509L684 515M706 506L692 508M830 576L816 585M837 564L807 583M844 552L800 580M857 537L786 582M847 536L779 579M844 531L770 578M831 533L773 569M824 530L765 567M814 529L763 562M806 527L763 554M794 527L768 544M785 526L766 538M774 526L765 532M917 593L897 604M912 589L879 607M915 580L867 607M914 574L850 610M912 568L844 606M912 561L839 602M904 559L843 593M910 548L838 589M903 545L829 587M896 542L837 576M884 543L844 565M878 539L849 555M874 535L855 545M866 532L863 533M1019 595L1021 610M1011 586L1016 613M1003 574L1010 616M995 564L1004 614M988 553L998 615M981 547L992 615M974 543L984 606M966 534L978 606M961 541L972 610M955 538L967 613M949 539L961 612M944 545L954 608M938 548L949 613M932 545L942 608M927 554L937 614M920 552L931 614M921 590L923 605M1067 591L1031 604M1066 585L1028 599M1065 579L1025 593M1062 574L1022 588M1061 568L1020 582M1063 561L1020 576M1064 554L1016 571M1055 551L1013 566M1057 544L1007 561M1053 539L1002 557M1053 533L1002 550M1051 527L996 546M1038 525L989 542M996 534L985 537M1127 583L1114 596M1132 569L1103 600M1131 560L1097 597M1138 543L1095 591M1142 530L1092 586M1143 520L1086 583M1135 521L1083 577M1130 517L1081 570M1124 515L1075 568M1115 515L1074 560M1109 513L1073 552M1105 508L1067 550M1097 509L1069 539M1091 506L1067 533M1084 505L1064 527M1078 502L1062 520M1074 499L1068 504M1171 521L1211 542M1152 518L1211 549M1156 527L1214 557M1157 534L1218 566M1149 537L1216 572M1148 543L1218 580M1142 547L1218 587M1143 554L1210 589M1143 561L1204 593M1141 567L1201 598M1136 571L1195 602M1141 580L1186 604M1134 583L1181 608M1135 591L1170 609M1131 595L1159 610M1310 537L1318 544M1297 533L1316 551M1285 530L1315 558M1271 524L1310 562M1263 526L1311 571M1243 515L1305 574M1241 521L1290 568M1231 520L1288 574M1228 526L1275 570M1224 530L1275 578M1225 539L1261 573M1221 543L1260 580M1220 551L1250 579M1223 562L1242 580M1222 570L1236 583M1225 580L1229 584M34 670L28 681M34 659L21 680M35 645L14 681M35 633L10 677M29 630L5 673M23 630L-5 678M20 623L-12 678M13 622L-14 670M6 622L-24 674M4 615L-28 670M-6 620L-35 670M-8 612L-43 673M-15 612L-45 664M-19 606L-49 658M-24 602L-51 649M-30 601L-48 633M-36 601L-50 624M-42 598L-51 613M109 693L101 700M110 684L97 696M114 673L91 693M116 663L82 693M112 658L80 687M119 644L73 685M117 637L64 685M113 633L60 681M115 623L52 680M105 624L47 677M102 618L47 669M102 610L39 667M99 605L45 654M91 604L46 645M83 604L40 642M83 595L42 632M76 593L45 622M71 590L63 597M214 667L207 679M212 659L195 688M208 653L188 688M204 647L181 689M201 641L172 693M198 635L167 688M195 627L159 691M196 613L156 685M183 623L149 685M178 621L140 687M167 628L131 692M159 630L125 690M157 622L113 700M147 626L118 678M139 628L122 660M132 629L125 641M265 571L271 573M259 575L275 580M252 579L275 587M245 583L271 592M236 586L272 598M232 591L270 604M228 596L278 613M220 600L270 617M209 603L272 624M204 607L278 632M205 614L277 638M214 623L279 645M210 628L276 651M215 636L272 655M217 643L274 662M213 648L277 670M216 656L275 675M222 664L278 683M221 670L234 674M370 613L370 617M364 612L365 629M358 608L359 643M352 608L354 656M346 608L348 655M340 609L342 662M334 607L336 664M327 596L330 664M321 596L324 660M315 597L318 666M309 598L312 661M303 594L306 665M297 595L301 672M291 595L295 675M284 579L288 667M278 576L279 588M446 604L442 684M439 608L436 688M433 612L430 683M428 606L425 679M421 610L418 688M415 617L412 683M409 607L406 685M403 610L400 687M397 612L394 686M391 611L388 679M385 611L382 687M379 612L376 684M373 620L371 675M366 642L365 667M359 656L359 662M511 683L502 690M509 677L491 692M506 672L480 693M502 668L464 697M498 663L455 696M499 655L455 689M494 651L446 688M493 644L449 679M496 634L449 671M490 632L447 665M487 626L447 657M489 617L450 648M488 610L453 637M478 611L453 630M475 605L452 623M468 603L450 617M461 601L449 610M535 592L564 592M525 598L582 599M504 603L594 605M494 609L598 611M494 615L592 617M499 621L592 623M512 627L583 629M509 633L590 635M512 639L583 641M510 645L588 647M508 651L584 653M511 657L577 658M514 663L573 664M519 669L563 670M514 675L555 676M519 681L545 682M518 687L532 688M678 670L668 676M673 666L642 682M673 660L619 686M670 655L617 681M666 650L606 679M655 649L603 674M655 642L599 670M648 638L594 665M648 632L599 656M649 625L593 652M648 618L595 645M639 616L600 635M636 611L602 628M635 605L601 621M630 601L606 612M615 601L604 606M752 664L743 671M752 657L730 674M746 654L717 675M748 645L700 681M747 638L694 678M740 636L691 673M740 628L686 669M738 623L685 662M738 615L683 656M737 608L675 655M738 599L675 647M723 603L676 638M717 600L670 636M715 594L669 629M703 596L663 626M694 595L657 623M688 592L656 616M680 591L649 614M672 589L650 606M665 587L643 603M817 670L801 675M816 664L791 671M820 657L782 667M819 651L766 665M825 643L765 659M821 638L756 655M827 631L763 647M831 623L755 643M831 617L765 634M824 613L755 631M820 608L760 623M824 600L754 619M822 595L755 612M815 590L753 607M795 589L755 600M783 586L757 593M768 584L759 586M900 688L891 693M909 675L884 690M913 666L873 690M917 656L863 689M912 652L861 683M917 642L847 685M922 632L845 679M915 629L838 676M914 623L827 676M910 618L834 665M907 613L828 661M902 609L839 648M887 611L838 641M871 614L839 634M857 615L837 628M1004 621L1017 625M986 622L1013 630M960 621L1011 636M943 622L1008 641M934 625L1008 647M928 630L1012 655M932 637L1015 662M930 643L1012 667M932 650L1011 673M935 657L1007 678M937 664L1006 684M932 669L1003 690M999 695L1006 697M1087 601L1095 617M1077 597L1094 626M1072 600L1095 639M1066 601L1090 643M1061 606L1093 660M1056 609L1088 664M1048 606L1088 676M1042 609L1084 680M1041 618L1080 686M1031 613L1073 686M1029 622L1067 686M1025 626L1055 678M1025 639L1049 680M1022 645L1044 682M1022 658L1036 682M1022 669L1030 683M1166 672L1139 676M1161 667L1096 677M1166 660L1107 669M1159 655L1101 664M1161 648L1100 658M1159 643L1100 652M1165 636L1099 646M1161 630L1103 639M1157 625L1100 634M1158 619L1108 626M1150 614L1100 621M1145 608L1100 615M1134 604L1104 609M1215 600L1219 602M1209 604L1223 611M1203 608L1226 619M1193 610L1229 627M1187 613L1234 636M1182 618L1241 646M1174 620L1239 652M1181 630L1243 661M1178 635L1244 668M1173 640L1241 673M1172 646L1240 679M1181 657L1243 688M1180 663L1225 685M1174 667L1212 686M1174 674L1197 685M1177 682L1182 684M1288 580L1314 582M1260 584L1311 588M1235 588L1317 595M1236 594L1318 601M1229 599L1306 606M1238 606L1312 612M1230 611L1313 618M1235 618L1316 625M1238 624L1317 631M1238 630L1311 636M1241 636L1307 642M1248 643L1297 647M1252 649L1289 653M1255 656L1279 658M1257 662L1270 663M5 764L-5 768M8 756L-21 768M12 748L-25 764M10 743L-29 759M16 734L-39 756M13 728L-38 749M21 719L-48 747M21 712L-46 740M26 704L-51 735M27 697L-54 730M30 689L-56 724M17 688L-49 715M2 688L-54 710M-8 685L-60 707M-18 683L-62 701M-35 683L-61 694M-45 681L-58 686M109 759L103 765M107 752L95 765M107 743L85 766M107 735L77 766M101 732L70 764M105 720L56 770M103 713L48 770M101 706L44 765M93 706L33 768M86 704L28 764M77 705L14 771M69 705L12 764M66 699L16 751M60 697L20 738M55 693L23 727M47 693L27 714M44 688L32 700M184 695L193 699M173 697L192 705M161 699L190 710M152 702L192 717M136 702L188 722M126 705L185 727M110 705L187 735M114 713L191 743M121 722L191 749M120 728L183 753M123 736L192 763M113 738L192 769M115 746L172 767M118 753L167 772M114 758L151 772M117 765L144 776M120 773L131 777M270 689L274 694M262 688L274 704M252 685L275 715M245 686L273 723M238 686L277 737M224 678L276 746M219 681L271 750M215 686L272 761M212 691L265 762M206 693L264 770M205 702L256 770M204 711L249 770M199 715L240 769M203 729L235 772M200 735L229 773M198 743L223 776M200 756L215 775M198 763L208 776M340 669L359 670M323 674L361 676M306 679L358 682M291 684L371 688M280 690L362 694M280 696L373 701M282 702L361 706M286 708L373 713M290 714L371 718M289 720L362 724M291 727L370 730M296 733L371 736M289 738L367 742M297 745L369 748M289 750L375 755M284 756L375 761M322 764L369 766M438 759L432 762M438 752L421 760M440 745L410 759M443 736L401 757M447 728L394 753M441 724L392 748M448 714L388 743M450 706L387 737M450 700L390 729M438 699L385 724M430 696L382 719M419 695L386 711M409 693L383 705M397 692L380 700M385 691L377 695M511 694L521 698M501 697L522 705M491 699L519 710M480 701L525 720M471 704L522 725M467 708L526 733M459 712L519 737M463 720L518 743M458 724L517 749M460 732L509 752M450 734L504 756M447 739L494 759M446 745L482 760M447 752L470 762M444 757L462 765M442 763L451 767M615 751L585 753M611 745L563 748M614 739L546 744M609 733L533 738M610 727L541 732M612 721L540 726M611 715L535 720M609 709L530 715M601 704L531 709M602 697L537 702M607 691L525 697M600 686L539 690M595 680L551 683M593 674L564 676M592 668L579 669M675 741L666 746M679 732L651 746M677 727L640 746M679 719L625 746M688 708L629 737M691 700L621 735M690 693L619 729M687 688L626 719M686 682L622 714M679 679L617 710M662 681L618 703M637 687L616 697M742 676L745 684M736 678L745 698M732 683L745 713M726 686L747 731M722 690L746 744M713 686L745 757M710 693L743 767M704 694L735 764M702 704L730 767M695 703L725 771M696 719L718 769M691 723L712 771M687 729L704 768M684 737L697 766M679 742L688 760M798 678L819 690M780 675L816 695M761 672L812 699M750 672L815 708M754 681L816 715M750 686L808 718M755 696L813 728M750 700L805 730M754 709L809 739M756 717L805 744M758 725L806 751M756 730L797 753M752 735L790 756M751 741L785 760M752 749L776 762M754 756L771 766M752 763L763 769M752 769L758 772M852 789L848 790M859 782L843 785M866 775L842 779M872 768L840 773M881 760L833 768M889 753L827 763M898 745L823 758M904 738L822 752M899 733L825 745M892 728L823 740M892 722L823 734M895 715L824 727M890 710L830 720M886 704L821 716M885 699L822 709M866 696L828 702M847 693L823 697M828 690L824 691M1000 749L996 757M1001 735L989 757M1002 721L983 755M999 713L972 763M998 704L968 757M994 699L957 766M989 694L953 760M984 692L946 760M973 698L939 760M968 695L937 752M965 689L932 748M959 687L929 741M952 688L922 742M949 680L918 737M939 686L915 730M938 675L909 728M931 676L907 720M927 671L903 713M920 671L903 702M900 694L898 698M1098 736L1094 744M1095 729L1083 749M1093 723L1073 754M1090 715L1061 762M1084 713L1057 758M1083 704L1047 763M1080 697L1045 754M1072 698L1037 756M1065 698L1033 752M1059 697L1021 760M1053 695L1020 750M1049 690L1008 758M1043 689L1005 751M1036 689L1009 733M1028 691L1009 722M1022 689L1008 712M1151 750L1145 755M1155 740L1140 752M1157 731L1134 749M1160 720L1127 747M1164 710L1125 741M1168 699L1119 738M1170 690L1111 736M1166 685L1104 734M1163 680L1102 728M1150 682L1104 719M1140 683L1098 716M1133 681L1096 710M1121 682L1095 703M1114 681L1092 698M1102 682L1090 691M1194 766L1158 767M1222 759L1164 761M1253 752L1167 755M1253 746L1170 749M1246 741L1164 743M1245 735L1163 737M1251 728L1169 731M1252 722L1171 725M1244 717L1168 719M1246 711L1176 712M1248 704L1179 706M1246 699L1180 700M1230 693L1183 694M1185 688L1179 688M1346 668L1346 683M1340 666L1340 689M1334 662L1334 697M1328 656L1328 704M1322 652L1322 715M1316 656L1316 723M1310 659L1310 728M1304 657L1304 740M1298 658L1298 743M1292 669L1292 736M1286 672L1286 738M1280 673L1280 736M1274 673L1274 743M1268 669L1268 736M1262 678L1262 724M1256 683L1256 707" stroke="#56638a" stroke-width="1.3" stroke-linecap="round" opacity="0.5" fill="none"/></svg>
<div id="tbox" class="a">Operations and<br>maintenance</div>
<div id="w1" class="win">
<div class="a" style="top:6.00px;font-size:15.5px;line-height:15.5px;font-family:'Liberation Serif',serif;color:#161513;-webkit-text-stroke:0.3px currentColor;left:5.00px;">Office Space</div>
<div class="a" style="left:552.30px;top:6.50px;width:79.40px;height:16.80px;border:1px solid #b9b6b1;border-radius:3px;background:#fff"></div>
<div class="a" style="top:11.81px;font-size:7.8px;line-height:7.8px;font-family:'Liberation Sans',sans-serif;color:#2b2926;-webkit-text-stroke:0.2px currentColor;font-weight:500;left:562.00px;">More Actions</div>
<svg class="a" style="left:616.50px;top:12.50px;" width="6.50" height="4.00" viewBox="0 0 6.5 4.0"><path d="M0 0H6.5L3.25 3.5Z" fill="#161513"/></svg>
<div class="a" style="left:640.70px;top:6.20px;width:31.60px;height:17.00px;background:#2b2724;border-radius:3px"></div>
<div class="a" style="top:11.80px;font-size:8.2px;line-height:8.2px;font-family:'Liberation Sans',sans-serif;color:#fff;-webkit-text-stroke:0.2px currentColor;font-weight:500;left:649.50px;">Edit</div>
<div class="a" style="top:39.01px;font-size:8.5px;line-height:8.5px;font-family:'Liberation Sans',sans-serif;color:#2b2926;-webkit-text-stroke:0.2px currentColor;font-weight:500;left:3.00px;">Office Space</div>
<div class="a" style="left:3.00px;top:55.00px;width:50.00px;height:2.00px;background:#161513"></div>
<div class="a" style="left:53.00px;top:56.00px;width:627.00px;height:1.00px;background:#ecebe8"></div>
<div class="a" style="left:3.00px;top:59.00px;width:373.00px;height:41.50px;background:#f3f2f0;border-radius:4px"></div>
<div class="a" style="top:68.21px;font-size:8.7px;line-height:8.7px;font-family:'Liberation Sans',sans-serif;color:#6f6c69;left:6.40px;">Use the Office Space form to lists all the details of the useable space that exist in a facility. The</div>
<div class="a" style="top:79.30px;font-size:8.7px;line-height:8.7px;font-family:'Liberation Sans',sans-serif;color:#6f6c69;left:6.40px;">administrator can create and update Office Space information.</div>
<div class="a" style="left:3.00px;top:105.00px;width:373.50px;height:374.50px;background:#f4f3f1;border:1px solid #e3e1dd;border-radius:4px"></div>
<svg class="a" style="left:5.00px;top:115.00px;" width="7.00" height="5.00" viewBox="0 0 7 5"><path d="M0.8 0.8L3.5 3.6L6.2 0.8" stroke="#161513" stroke-width="1.4" fill="none"/></svg>
<div class="a" style="top:114.70px;font-size:10.2px;line-height:10.2px;font-family:'Liberation Sans',sans-serif;color:#3b4656;font-weight:700;left:18.00px;">Key Information</div>
<div class="a" style="top:131.51px;font-size:8.3px;line-height:8.3px;font-family:'Liberation Sans',sans-serif;color:#3b3835;left:8.30px;transform:scaleX(0.9);transform-origin:0 0;-webkit-text-stroke:0.35px #3b3835;">Space Number</div>
<svg class="a" style="left:62.10px;top:130.80px;" width="8.80" height="8.80" viewBox="0 0 8.799999999999997 8.800000000000011"><circle cx="4.4" cy="4.4" r="3.8000000000000003" stroke="#2b2926" stroke-width="1" fill="none"/><text x="4.4" y="6.7" font-size="6.4" text-anchor="middle" font-family="Liberation Sans" font-weight="700" fill="#2b2926">?</text></svg>
<div class="a" style="top:131.51px;font-size:8.3px;line-height:8.3px;font-family:'Liberation Sans',sans-serif;color:#3b3835;left:196.50px;transform:scaleX(0.9);transform-origin:0 0;-webkit-text-stroke:0.35px #3b3835;">Space Name</div>
<svg class="a" style="left:242.90px;top:130.80px;" width="8.80" height="8.80" viewBox="0 0 8.800000000000011 8.800000000000011"><circle cx="4.4" cy="4.4" r="3.8000000000000003" stroke="#2b2926" stroke-width="1" fill="none"/><text x="4.4" y="6.7" font-size="6.4" text-anchor="middle" font-family="Liberation Sans" font-weight="700" fill="#2b2926">?</text></svg>
<div class="a" style="left:8.30px;top:145.00px;width:168.40px;height:23.50px;background:#f2f1ef;border:1px solid #e1dfdb;border-radius:3px"></div>
<div class="a" style="top:153.01px;font-size:9px;line-height:9px;font-family:'Liberation Sans',sans-serif;color:#3b3835;-webkit-text-stroke:0.2px currentColor;font-weight:500;left:15.30px;">Area 110</div>
<div class="a" style="left:196.50px;top:145.00px;width:168.10px;height:23.50px;background:#f2f1ef;border:1px solid #e1dfdb;border-radius:3px"></div>
<div class="a" style="top:153.01px;font-size:9px;line-height:9px;font-family:'Liberation Sans',sans-serif;color:#3b3835;-webkit-text-stroke:0.2px currentColor;font-weight:500;left:203.50px;">Office Area 110</div>
<div class="a" style="top:174.72px;font-size:8.3px;line-height:8.3px;font-family:'Liberation Sans',sans-serif;color:#3b3835;left:8.30px;transform:scaleX(0.9);transform-origin:0 0;-webkit-text-stroke:0.35px #3b3835;">Space Category</div>
<svg class="a" style="left:65.40px;top:174.00px;" width="8.80" height="8.80" viewBox="0 0 8.799999999999997 8.800000000000011"><circle cx="4.4" cy="4.4" r="3.8000000000000003" stroke="#2b2926" stroke-width="1" fill="none"/><text x="4.4" y="6.7" font-size="6.4" text-anchor="middle" font-family="Liberation Sans" font-weight="700" fill="#2b2926">?</text></svg>
<div class="a" style="top:174.72px;font-size:8.3px;line-height:8.3px;font-family:'Liberation Sans',sans-serif;color:#3b3835;left:196.50px;transform:scaleX(0.9);transform-origin:0 0;-webkit-text-stroke:0.35px #3b3835;">Space Type</div>
<div class="a" style="left:8.30px;top:188.50px;width:168.40px;height:24.00px;background:#f2f1ef;border:1px solid #e1dfdb;border-radius:3px"></div>
<div class="a" style="top:196.51px;font-size:9px;line-height:9px;font-family:'Liberation Sans',sans-serif;color:#3b3835;-webkit-text-stroke:0.2px currentColor;font-weight:500;left:15.30px;">Office Space</div>
<div class="a" style="left:196.50px;top:188.50px;width:168.10px;height:24.00px;background:#f2f1ef;border:1px solid #e1dfdb;border-radius:3px"></div>
<div class="a" style="top:196.51px;font-size:9px;line-height:9px;font-family:'Liberation Sans',sans-serif;color:#3b3835;-webkit-text-stroke:0.2px currentColor;font-weight:500;left:203.50px;">Office</div>
<div class="a" style="top:217.72px;font-size:8.3px;line-height:8.3px;font-family:'Liberation Sans',sans-serif;color:#3b3835;left:8.30px;transform:scaleX(0.9);transform-origin:0 0;-webkit-text-stroke:0.35px #3b3835;">Level Picker</div>
<div class="a" style="top:217.72px;font-size:8.3px;line-height:8.3px;font-family:'Liberation Sans',sans-serif;color:#3b3835;left:196.50px;transform:scaleX(0.9);transform-origin:0 0;-webkit-text-stroke:0.35px #3b3835;">Area</div>
<div class="a" style="left:8.30px;top:232.00px;width:139.70px;height:23.00px;background:#f2f1ef;border:1px solid #e1dfdb;border-radius:3px"></div>
<div class="a" style="top:240.01px;font-size:9px;line-height:9px;font-family:'Liberation Sans',sans-serif;color:#3b3835;-webkit-text-stroke:0.2px currentColor;font-weight:500;left:15.30px;">Floor 1</div>
<div class="a" style="left:196.50px;top:232.00px;width:168.10px;height:23.00px;background:#f2f1ef;border:1px solid #e1dfdb;border-radius:3px"></div>
<div class="a" style="top:263.01px;font-size:8.3px;line-height:8.3px;font-family:'Liberation Sans',sans-serif;color:#3b3835;left:8.30px;transform:scaleX(0.9);transform-origin:0 0;-webkit-text-stroke:0.35px #3b3835;">Level Name</div>
<div class="a" style="top:263.01px;font-size:8.3px;line-height:8.3px;font-family:'Liberation Sans',sans-serif;color:#3b3835;left:196.50px;transform:scaleX(0.9);transform-origin:0 0;-webkit-text-stroke:0.35px #3b3835;">Unit of Measure</div>
<div class="a" style="left:8.30px;top:278.00px;width:168.40px;height:23.50px;background:#f2f1ef;border:1px solid #e1dfdb;border-radius:3px"></div>
<div class="a" style="top:286.01px;font-size:9px;line-height:9px;font-family:'Liberation Sans',sans-serif;color:#3b3835;-webkit-text-stroke:0.2px currentColor;font-weight:500;left:15.30px;">Floor 1</div>
<div class="a" style="left:196.50px;top:278.00px;width:168.10px;height:23.50px;background:#f2f1ef;border:1px solid #e1dfdb;border-radius:3px"></div>
<div class="a" style="top:286.01px;font-size:9px;line-height:9px;font-family:'Liberation Sans',sans-serif;color:#3b3835;-webkit-text-stroke:0.2px currentColor;font-weight:500;left:203.50px;">Sq Ft</div>
<div class="a" style="top:307.01px;font-size:8.3px;line-height:8.3px;font-family:'Liberation Sans',sans-serif;color:#3b3835;left:8.30px;transform:scaleX(0.9);transform-origin:0 0;-webkit-text-stroke:0.35px #3b3835;">Assigned Department</div>
<div class="a" style="left:8.30px;top:321.00px;width:168.40px;height:24.30px;background:#f2f1ef;border:1px solid #e1dfdb;border-radius:3px"></div>
<div class="a" style="top:329.01px;font-size:9px;line-height:9px;font-family:'Liberation Sans',sans-serif;color:#3b3835;-webkit-text-stroke:0.2px currentColor;font-weight:500;left:15.30px;">Logistics</div>
<div class="a" style="top:350.01px;font-size:8.3px;line-height:8.3px;font-family:'Liberation Sans',sans-serif;color:#3b3835;left:8.30px;transform:scaleX(0.9);transform-origin:0 0;-webkit-text-stroke:0.35px #3b3835;">Allow Reservation</div>
<div class="a" style="top:350.01px;font-size:8.3px;line-height:8.3px;font-family:'Liberation Sans',sans-serif;color:#3b3835;left:196.50px;transform:scaleX(0.9);transform-origin:0 0;-webkit-text-stroke:0.35px #3b3835;">Allow Overbooking</div>
<div class="a" style="left:8.30px;top:364.00px;width:168.40px;height:24.00px;background:#f2f1ef;border:1px solid #e1dfdb;border-radius:3px"></div>
<div class="a" style="top:372.01px;font-size:9px;line-height:9px;font-family:'Liberation Sans',sans-serif;color:#3b3835;-webkit-text-stroke:0.2px currentColor;font-weight:500;left:15.30px;">No</div>
<div class="a" style="left:196.50px;top:364.00px;width:168.10px;height:24.00px;background:#f2f1ef;border:1px solid #e1dfdb;border-radius:3px"></div>
<div class="a" style="top:372.01px;font-size:9px;line-height:9px;font-family:'Liberation Sans',sans-serif;color:#3b3835;-webkit-text-stroke:0.2px currentColor;font-weight:500;left:203.50px;">No overbooking</div>
<div class="a" style="top:393.01px;font-size:8.3px;line-height:8.3px;font-family:'Liberation Sans',sans-serif;color:#3b3835;left:8.30px;transform:scaleX(0.9);transform-origin:0 0;-webkit-text-stroke:0.35px #3b3835;">Space Description</div>
<div class="a" style="top:393.01px;font-size:8.3px;line-height:8.3px;font-family:'Liberation Sans',sans-serif;color:#3b3835;left:196.50px;transform:scaleX(0.9);transform-origin:0 0;-webkit-text-stroke:0.35px #3b3835;">Image</div>
<svg class="a" style="left:221.40px;top:393.00px;" width="8.80" height="8.80" viewBox="0 0 8.800000000000011 8.799999999999955"><circle cx="4.4" cy="4.4" r="3.8000000000000003" stroke="#2b2926" stroke-width="1" fill="none"/><text x="4.4" y="6.7" font-size="6.4" text-anchor="middle" font-family="Liberation Sans" font-weight="700" fill="#2b2926">?</text></svg>
<div class="a" style="left:8.30px;top:408.00px;width:168.40px;height:63.50px;background:#f2f1ef;border:1px solid #e1dfdb;border-radius:3px"></div>
<svg class="a" style="left:169.00px;top:464.00px;" width="6.00" height="6.00" viewBox="0 0 6 6"><path d="M5.5 0.5L0.5 5.5M5.5 3L3 5.5" stroke="#8a8884" stroke-width="0.8"/></svg>
<div class="a" style="left:3.00px;top:483.70px;width:373.50px;height:27.50px;background:#f4f3f1;border:1px solid #e3e1dd;border-radius:4px"></div>
<svg class="a" style="left:6.00px;top:492.70px;" width="5.00" height="8.00" viewBox="0 0 5 8.0"><path d="M0.8 0.8L3.6 3.8L0.8 6.8" stroke="#161513" stroke-width="1.4" fill="none"/></svg>
<div class="a" style="top:493.20px;font-size:10px;line-height:10px;font-family:'Liberation Sans',sans-serif;color:#3b4656;font-weight:700;left:18.00px;">Current Occupancy</div>
<div class="a" style="left:3.00px;top:515.70px;width:373.50px;height:27.60px;background:#f4f3f1;border:1px solid #e3e1dd;border-radius:4px"></div>
<svg class="a" style="left:6.00px;top:524.70px;" width="5.00" height="8.00" viewBox="0 0 5 8.0"><path d="M0.8 0.8L3.6 3.8L0.8 6.8" stroke="#161513" stroke-width="1.4" fill="none"/></svg>
<div class="a" style="top:525.20px;font-size:10px;line-height:10px;font-family:'Liberation Sans',sans-serif;color:#3b4656;font-weight:700;left:18.00px;">Future Planned Occupancy</div>
<div class="a" style="left:3.00px;top:547.80px;width:373.50px;height:124.20px;background:#f4f3f1;border:1px solid #e3e1dd;border-radius:4px"></div>
<svg class="a" style="left:5.00px;top:557.50px;" width="7.00" height="5.00" viewBox="0 0 7 5.0"><path d="M0.8 0.8L3.5 3.6L6.2 0.8" stroke="#161513" stroke-width="1.4" fill="none"/></svg>
<div class="a" style="top:556.81px;font-size:10px;line-height:10px;font-family:'Liberation Sans',sans-serif;color:#3b4656;font-weight:700;left:18.00px;">Record Information</div>
<div class="a" style="top:573.00px;font-size:8.8px;line-height:8.8px;font-family:'Liberation Sans',sans-serif;color:#6f6c69;left:7.00px;">System information about this record.</div>
<div class="a" style="top:586.01px;font-size:8.3px;line-height:8.3px;font-family:'Liberation Sans',sans-serif;color:#3b3835;left:8.30px;transform:scaleX(0.9);transform-origin:0 0;-webkit-text-stroke:0.35px #3b3835;">Creator</div>
<div class="a" style="left:8.00px;top:601.00px;width:161.00px;height:22.00px;background:#f2f1ef;border:1px solid #e1dfdb;border-radius:3px"></div>
<div class="a" style="top:607.52px;font-size:8.95px;line-height:8.95px;font-family:'Liberation Sans',sans-serif;color:#23708c;-webkit-text-stroke:0.2px currentColor;font-weight:500;left:13.00px;">Company Administrator</div>
<div class="a" style="top:628.01px;font-size:8.3px;line-height:8.3px;font-family:'Liberation Sans',sans-serif;color:#3b3835;left:8.30px;transform:scaleX(0.9);transform-origin:0 0;-webkit-text-stroke:0.35px #3b3835;">Creation Date</div>
<div class="a" style="top:628.01px;font-size:8.3px;line-height:8.3px;font-family:'Liberation Sans',sans-serif;color:#3b3835;left:196.75px;transform:scaleX(0.9);transform-origin:0 0;-webkit-text-stroke:0.35px #3b3835;">Record Last Update Date</div>
<div class="a" style="left:8.00px;top:642.50px;width:168.00px;height:29.50px;background:#f2f1ef;border:1px solid #e1dfdb;border-radius:3px"></div>
<div class="a" style="top:649.71px;font-size:9.4px;line-height:9.4px;font-family:'Liberation Sans',sans-serif;color:#3b3835;-webkit-text-stroke:0.2px currentColor;font-weight:500;left:15.00px;">01/18/2025 12:56 PM</div>
<div class="a" style="left:196.00px;top:642.50px;width:168.60px;height:29.50px;background:#f2f1ef;border:1px solid #e1dfdb;border-radius:3px"></div>
<div class="a" style="top:649.71px;font-size:9.4px;line-height:9.4px;font-family:'Liberation Sans',sans-serif;color:#3b3835;-webkit-text-stroke:0.2px currentColor;font-weight:500;left:203.50px;">03/03/2025 07:20 PM</div>
<div class="a" style="left:383.50px;top:58.00px;width:5.00px;height:606.00px;background:#e6e5e3"></div>
<div class="a" style="left:384.00px;top:64.00px;width:4.00px;height:600.00px;background:#dad9d7"></div>
<div class="a" style="left:390.00px;top:56.00px;width:290.00px;height:1.00px;background:#ecebe8"></div>
<div class="a" style="top:64.60px;font-size:9.05px;line-height:9.05px;font-family:'Liberation Sans',sans-serif;color:#6b6865;left:399.70px;">Comments</div>
<div class="a" style="top:64.60px;font-size:9.05px;line-height:9.05px;font-family:'Liberation Sans',sans-serif;color:#6b6865;left:460.70px;">Linked Records</div>
<div class="a" style="top:64.60px;font-size:9.05px;line-height:9.05px;font-family:'Liberation Sans',sans-serif;color:#6b6865;left:538.80px;">Linked Mail</div>
<div class="a" style="top:64.60px;font-size:9.05px;line-height:9.05px;font-family:'Liberation Sans',sans-serif;color:#6b6865;left:602.50px;">Audit Log</div>
<div class="a" style="left:644.50px;top:60.00px;width:1.00px;height:18.00px;background:#e6e4e1"></div>
<svg class="a" style="left:649.50px;top:65.00px;" width="7.00" height="8.00" viewBox="0 0 7.0 8"><path d="M2 0.8L5.2 4L2 7.2" stroke="#161513" stroke-width="1.3" fill="none"/></svg>
<svg class="a" style="left:668.00px;top:64.50px;" width="12.00" height="10.50" viewBox="0 0 12 10.5"><path d="M0.7 3.5V0.7H3.5M8 0.7H10.8V3.5M10.8 7V9.8H8M3.5 9.8H0.7V7" stroke="#161513" stroke-width="1.3" fill="none"/></svg>
<div class="a" style="top:93.61px;font-size:10.9px;line-height:10.9px;font-family:'Liberation Sans',sans-serif;color:#161513;font-weight:700;left:399.70px;">Space Content</div>
<div class="a" style="left:605.30px;top:87.00px;width:69.20px;height:16.30px;border:1px solid #b9b6b1;border-radius:3px;background:#fff"></div>
<div class="a" style="top:92.71px;font-size:7.5px;line-height:7.5px;font-family:'Liberation Sans',sans-serif;color:#161513;-webkit-text-stroke:0.2px currentColor;font-weight:500;left:614.50px;">View Graphic...</div>
<div class="a" style="top:121.90px;font-size:7.5px;line-height:7.5px;font-family:'Liberation Sans',sans-serif;color:#161513;font-weight:700;left:403.00px;">Type</div>
<div class="a" style="top:121.90px;font-size:7.5px;line-height:7.5px;font-family:'Liberation Sans',sans-serif;color:#161513;font-weight:700;left:439.60px;">Ref No.</div>
<div class="a" style="top:121.90px;font-size:7.5px;line-height:7.5px;font-family:'Liberation Sans',sans-serif;color:#161513;font-weight:700;left:501.60px;">Title/User Name</div>
<div class="a" style="top:121.90px;font-size:7.5px;line-height:7.5px;font-family:'Liberation Sans',sans-serif;color:#161513;font-weight:700;left:581.20px;">Record Type</div>
<div class="a" style="top:121.90px;font-size:7.5px;line-height:7.5px;font-family:'Liberation Sans',sans-serif;color:#161513;font-weight:700;left:661.60px;">S</div>
<div class="a" style="left:399.90px;top:132.00px;width:265.10px;height:16.20px;background:#e4eedc"></div>
<svg class="a" style="left:404.00px;top:132.00px;" width="10.00" height="11.00" viewBox="0 0 10 11"><rect x="0.75" y="1.25" width="8" height="9" rx="1.2" stroke="#2d7088" stroke-width="1.5" fill="#dcf1f6"/><path d="M2.5 3.5H7M2.5 5.5H7M2.5 7.5H5" stroke="#2d7088" stroke-width="1"/></svg>
<div class="a" style="top:137.00px;font-size:7.6px;line-height:7.6px;font-family:'Liberation Sans',sans-serif;color:#76806a;left:439.60px;">usp_xusp-0001</div>
<div class="a" style="top:137.00px;font-size:7.6px;line-height:7.6px;font-family:'Liberation Sans',sans-serif;color:#76806a;left:501.90px;">Office Area 110</div>
<div class="a" style="top:137.00px;font-size:7.6px;line-height:7.6px;font-family:'Liberation Sans',sans-serif;color:#76806a;left:581.20px;">Office Space</div>
<div class="a" style="top:137.00px;font-size:7.6px;line-height:7.6px;font-family:'Liberation Sans',sans-serif;color:#76806a;left:661.60px;"></div>
<div class="a" style="left:436.60px;top:148.00px;width:1.00px;height:16.00px;background:#ebeae8"></div>
<div class="a" style="left:498.00px;top:148.00px;width:1.00px;height:16.00px;background:#ebeae8"></div>
<div class="a" style="left:578.20px;top:148.00px;width:1.00px;height:16.00px;background:#ebeae8"></div>
<div class="a" style="left:658.20px;top:148.00px;width:1.00px;height:16.00px;background:#ebeae8"></div>
<div class="a" style="left:399.90px;top:148.00px;width:265.10px;height:1.00px;background:#ebeae8"></div>
<svg class="a" style="left:404.00px;top:148.00px;" width="10.00" height="11.00" viewBox="0 0 10 11"><rect x="0.75" y="1.25" width="8" height="9" rx="1.2" stroke="#2d7088" stroke-width="1.5" fill="#dcf1f6"/><path d="M2.5 3.5H7M2.5 5.5H7M2.5 7.5H5" stroke="#2d7088" stroke-width="1"/></svg>
<div class="a" style="top:153.00px;font-size:7.6px;line-height:7.6px;font-family:'Liberation Sans',sans-serif;color:#7a7774;left:439.60px;">EMP-10000092</div>
<div class="a" style="top:153.00px;font-size:7.6px;line-height:7.6px;font-family:'Liberation Sans',sans-serif;color:#7a7774;left:501.90px;">1354213 Arthur M...</div>
<div class="a" style="top:153.00px;font-size:7.6px;line-height:7.6px;font-family:'Liberation Sans',sans-serif;color:#7a7774;left:581.20px;">Employee</div>
<div class="a" style="top:153.00px;font-size:7.6px;line-height:7.6px;font-family:'Liberation Sans',sans-serif;color:#7a7774;left:661.60px;">A</div>
<div class="a" style="left:436.60px;top:164.00px;width:1.00px;height:16.00px;background:#ebeae8"></div>
<div class="a" style="left:498.00px;top:164.00px;width:1.00px;height:16.00px;background:#ebeae8"></div>
<div class="a" style="left:578.20px;top:164.00px;width:1.00px;height:16.00px;background:#ebeae8"></div>
<div class="a" style="left:658.20px;top:164.00px;width:1.00px;height:16.00px;background:#ebeae8"></div>
<div class="a" style="left:399.90px;top:164.00px;width:265.10px;height:1.00px;background:#ebeae8"></div>
<svg class="a" style="left:404.00px;top:164.00px;" width="10.00" height="11.00" viewBox="0 0 10 11"><rect x="0.75" y="1.25" width="8" height="9" rx="1.2" stroke="#2d7088" stroke-width="1.5" fill="#dcf1f6"/><path d="M2.5 3.5H7M2.5 5.5H7M2.5 7.5H5" stroke="#2d7088" stroke-width="1"/></svg>
<div class="a" style="top:169.00px;font-size:7.6px;line-height:7.6px;font-family:'Liberation Sans',sans-serif;color:#7a7774;left:439.60px;">SPA-00008</div>
<div class="a" style="top:169.00px;font-size:7.6px;line-height:7.6px;font-family:'Liberation Sans',sans-serif;color:#7a7774;left:501.90px;">Need a cubicle to w...</div>
<div class="a" style="top:169.00px;font-size:7.6px;line-height:7.6px;font-family:'Liberation Sans',sans-serif;color:#7a7774;left:581.20px;">Space Assignment</div>
<div class="a" style="top:169.00px;font-size:7.6px;line-height:7.6px;font-family:'Liberation Sans',sans-serif;color:#7a7774;left:661.60px;">A</div>
<div class="a" style="left:436.60px;top:180.00px;width:1.00px;height:16.00px;background:#ebeae8"></div>
<div class="a" style="left:498.00px;top:180.00px;width:1.00px;height:16.00px;background:#ebeae8"></div>
<div class="a" style="left:578.20px;top:180.00px;width:1.00px;height:16.00px;background:#ebeae8"></div>
<div class="a" style="left:658.20px;top:180.00px;width:1.00px;height:16.00px;background:#ebeae8"></div>
<div class="a" style="left:399.90px;top:180.00px;width:265.10px;height:1.00px;background:#ebeae8"></div>
<svg class="a" style="left:404.00px;top:180.00px;" width="10.00" height="11.00" viewBox="0 0 10 11"><rect x="0.75" y="1.25" width="8" height="9" rx="1.2" stroke="#2d7088" stroke-width="1.5" fill="#dcf1f6"/><path d="M2.5 3.5H7M2.5 5.5H7M2.5 7.5H5" stroke="#2d7088" stroke-width="1"/></svg>
<div class="a" style="top:185.00px;font-size:7.6px;line-height:7.6px;font-family:'Liberation Sans',sans-serif;color:#7a7774;left:439.60px;">SR-10000000...</div>
<div class="a" style="top:185.00px;font-size:7.6px;line-height:7.6px;font-family:'Liberation Sans',sans-serif;color:#7a7774;left:501.90px;">Too hot</div>
<div class="a" style="top:185.00px;font-size:7.6px;line-height:7.6px;font-family:'Liberation Sans',sans-serif;color:#7a7774;left:581.20px;">Service Request</div>
<div class="a" style="top:185.00px;font-size:7.6px;line-height:7.6px;font-family:'Liberation Sans',sans-serif;color:#7a7774;left:661.60px;">S</div>
<div class="a" style="left:436.60px;top:196.00px;width:1.00px;height:16.00px;background:#ebeae8"></div>
<div class="a" style="left:498.00px;top:196.00px;width:1.00px;height:16.00px;background:#ebeae8"></div>
<div class="a" style="left:578.20px;top:196.00px;width:1.00px;height:16.00px;background:#ebeae8"></div>
<div class="a" style="left:658.20px;top:196.00px;width:1.00px;height:16.00px;background:#ebeae8"></div>
<div class="a" style="left:399.90px;top:196.00px;width:265.10px;height:1.00px;background:#ebeae8"></div>
<svg class="a" style="left:404.00px;top:196.00px;" width="10.00" height="11.00" viewBox="0 0 10 11"><rect x="0.75" y="1.25" width="8" height="9" rx="1.2" stroke="#2d7088" stroke-width="1.5" fill="#dcf1f6"/><path d="M2.5 3.5H7M2.5 5.5H7M2.5 7.5H5" stroke="#2d7088" stroke-width="1"/></svg>
<div class="a" style="top:201.00px;font-size:7.6px;line-height:7.6px;font-family:'Liberation Sans',sans-serif;color:#7a7774;left:439.60px;">WOR-1000011</div>
<div class="a" style="top:201.00px;font-size:7.6px;line-height:7.6px;font-family:'Liberation Sans',sans-serif;color:#7a7774;left:501.90px;">Too hot</div>
<div class="a" style="top:201.00px;font-size:7.6px;line-height:7.6px;font-family:'Liberation Sans',sans-serif;color:#7a7774;left:581.20px;">Work Order Request</div>
<div class="a" style="top:201.00px;font-size:7.6px;line-height:7.6px;font-family:'Liberation Sans',sans-serif;color:#7a7774;left:661.60px;">C</div>
<div class="a" style="left:436.60px;top:212.00px;width:1.00px;height:16.00px;background:#ebeae8"></div>
<div class="a" style="left:498.00px;top:212.00px;width:1.00px;height:16.00px;background:#ebeae8"></div>
<div class="a" style="left:578.20px;top:212.00px;width:1.00px;height:16.00px;background:#ebeae8"></div>
<div class="a" style="left:658.20px;top:212.00px;width:1.00px;height:16.00px;background:#ebeae8"></div>
<div class="a" style="left:399.90px;top:212.00px;width:265.10px;height:1.00px;background:#ebeae8"></div>
<svg class="a" style="left:404.00px;top:212.00px;" width="10.00" height="11.00" viewBox="0 0 10 11"><rect x="0.75" y="1.25" width="8" height="9" rx="1.2" stroke="#2d7088" stroke-width="1.5" fill="#dcf1f6"/><path d="M2.5 3.5H7M2.5 5.5H7M2.5 7.5H5" stroke="#2d7088" stroke-width="1"/></svg>
<div class="a" style="top:217.00px;font-size:7.6px;line-height:7.6px;font-family:'Liberation Sans',sans-serif;color:#7a7774;left:439.60px;">SPA-00014</div>
<div class="a" style="top:217.00px;font-size:7.6px;line-height:7.6px;font-family:'Liberation Sans',sans-serif;color:#7a7774;left:501.90px;">Office Area B...</div>
<div class="a" style="top:217.00px;font-size:7.6px;line-height:7.6px;font-family:'Liberation Sans',sans-serif;color:#7a7774;left:581.20px;">Space Assignment</div>
<div class="a" style="top:217.00px;font-size:7.6px;line-height:7.6px;font-family:'Liberation Sans',sans-serif;color:#7a7774;left:661.60px;">A</div>
<div class="a" style="left:665.00px;top:112.00px;width:15.00px;height:552.00px;background:#fff"></div>
</div>
<div id="w2" class="win">
<div class="a" style="top:10.80px;font-size:25px;line-height:25px;font-family:'Liberation Serif',serif;color:#161513;-webkit-text-stroke:0.3px currentColor;left:9.70px;">Office Space</div>
<div class="a" style="left:0.00px;top:55.75px;width:843.00px;height:34.95px;background:#f3f2f0"></div>
<svg class="a" style="left:18.70px;top:65.30px;" width="17.90" height="16.90" viewBox="0 0 17.900000000000034 16.899999999999977"><path d="M8.950000000000017 0V16.899999999999977M0 8.449999999999989H17.900000000000034" stroke="#161513" stroke-width="2"/></svg>
<div class="a" style="top:68.91px;font-size:12px;line-height:12px;font-family:'Liberation Sans',sans-serif;color:#161513;-webkit-text-stroke:0.2px currentColor;font-weight:500;letter-spacing:0.1px;left:47.10px;">Create</div>
<div class="a" style="top:68.91px;font-size:12.4px;line-height:12.4px;font-family:'Liberation Sans',sans-serif;color:#161513;-webkit-text-stroke:0.2px currentColor;font-weight:500;letter-spacing:0.3px;left:116.80px;">Actions</div>
<svg class="a" style="left:174.00px;top:70.40px;" width="8.80" height="5.60" viewBox="0 0 8.800000000000011 5.600000000000023"><path d="M0 0H8.800000000000011L4.400000000000006 5.600000000000023Z" fill="#161513"/></svg>
<div class="a" style="top:67.90px;font-size:13px;line-height:13px;font-family:'Liberation Sans',sans-serif;color:#161513;-webkit-text-stroke:0.2px currentColor;font-weight:500;letter-spacing:0.6px;left:218.00px;">View :</div>
<div class="a" style="left:259.50px;top:58.70px;width:120.40px;height:31.00px;border:1px dotted #3a3a3a;border-radius:5px;background:#f3f2f0;box-shadow:inset 0 0 0 1px rgba(0,0,0,.12)"></div>
<div class="a" style="top:68.71px;font-size:12px;line-height:12px;font-family:'Liberation Sans',sans-serif;color:#161513;-webkit-text-stroke:0.2px currentColor;font-weight:500;letter-spacing:0.1px;left:276.40px;">All Records</div>
<svg class="a" style="left:352.70px;top:71.00px;" width="10.00" height="6.00" viewBox="0 0 10.0 6"><path d="M0 0H10.0L5.0 6Z" fill="#161513"/></svg>
<svg class="a" style="left:386.00px;top:64.50px;" width="19.00" height="19.00" viewBox="0 0 24 24"><path d="M1.8 22.2L3.2 16.6L18.4 1.4L22.6 5.6L7.4 20.8Z M15.6 4.2L19.8 8.4" stroke="#161513" stroke-width="2.3" fill="none" stroke-linejoin="miter"/></svg>
<svg class="a" style="left:416.50px;top:64.50px;" width="19.00" height="19.00" viewBox="0 0 24 24"><path d="M15.8 19.5A8.3 8.3 0 1 1 20.3 11.6" stroke="#161513" stroke-width="2.5" fill="none"/><path d="M15.6 11.4H24.2L19.7 16.8Z" fill="#161513"/></svg>
<svg class="a" style="left:449.00px;top:64.00px;" width="20.00" height="20.00" viewBox="0 0 20.0 20.0"><rect x="1.2" y="2.7" width="17.2" height="15.2" stroke="#161513" stroke-width="1.7" fill="#fff"/><path d="M3.8 8.75H15.5M3.8 12.85H15.5" stroke="#777" stroke-width="1.2"/><rect x="3.8" y="7.9" width="1.7" height="1.7" fill="#161513"/><rect x="3.8" y="12.0" width="1.7" height="1.7" fill="#161513"/><rect x="6.3" y="7.9" width="1.7" height="1.7" fill="#161513"/><rect x="6.3" y="12.0" width="1.7" height="1.7" fill="#161513"/><rect x="8.8" y="7.9" width="1.7" height="1.7" fill="#161513"/><rect x="8.8" y="12.0" width="1.7" height="1.7" fill="#161513"/><rect x="11.3" y="7.9" width="1.7" height="1.7" fill="#161513"/><rect x="11.3" y="12.0" width="1.7" height="1.7" fill="#161513"/><rect x="13.8" y="7.9" width="1.7" height="1.7" fill="#161513"/><rect x="13.8" y="12.0" width="1.7" height="1.7" fill="#161513"/><path d="M6.3 0.6V4.6M13.3 0.6V4.6" stroke="#161513" stroke-width="1.7" stroke-linecap="round"/></svg>
<svg class="a" style="left:487.00px;top:64.00px;" width="19.00" height="19.00" viewBox="0 0 24 24"><path d="M6 9V3H18V9" stroke="#161513" stroke-width="2.2" fill="none"/><rect x="2" y="9" width="20" height="9" rx="2" stroke="#161513" stroke-width="2.2" fill="none"/><rect x="6.5" y="14" width="11" height="7.5" stroke="#161513" stroke-width="2.2" fill="#fff"/></svg>
<svg class="a" style="left:518.00px;top:71.00px;" width="9.70" height="6.00" viewBox="0 0 9.700000000000045 6"><path d="M0 0H9.700000000000045L4.850000000000023 6Z" fill="#161513"/></svg>
<svg class="a" style="left:547.50px;top:64.00px;" width="19.00" height="19.00" viewBox="0 0 24 24"><circle cx="10" cy="10" r="7.2" stroke="#161513" stroke-width="2.6" fill="none"/><path d="M15.3 15.3L21.8 21.8" stroke="#161513" stroke-width="2.8"/></svg>
<svg class="a" style="left:579.00px;top:64.50px;" width="19.00" height="19.00" viewBox="0 0 24 24"><path d="M1 2.5H22M1 8H22M1 13.8H8.5M1 19.8H8.5" stroke="#161513" stroke-width="2.7"/><circle cx="15.3" cy="16" r="3.6" stroke="#161513" stroke-width="2.6" fill="none"/><path d="M18 18.7L21.2 22" stroke="#161513" stroke-width="2.7"/></svg>
<svg class="a" style="left:610.50px;top:64.00px;" width="19.00" height="19.00" viewBox="0 0 24 24"><circle cx="12" cy="12" r="10.2" stroke="#161513" stroke-width="2.5" fill="none"/><path d="M8.7 9.3A3.4 3.4 0 1 1 13.2 12.5C12.3 12.9 12 13.5 12 14.6V15.2" stroke="#161513" stroke-width="2.6" fill="none"/><circle cx="12" cy="18.4" r="1.6" fill="#161513"/></svg>
<div class="a" style="left:16.75px;top:90.70px;width:1.00px;height:200.30px;background:#e6e6e6"></div>
<div class="a" style="top:121.61px;font-size:12.05px;line-height:12.05px;font-family:'Liberation Sans',sans-serif;color:#161513;font-weight:700;left:22.40px;">Level Name</div>
<div class="a" style="top:107.81px;font-size:12.05px;line-height:12.05px;font-family:'Liberation Sans',sans-serif;color:#161513;font-weight:700;left:172.90px;">Space</div>
<div class="a" style="top:121.61px;font-size:12.05px;line-height:12.05px;font-family:'Liberation Sans',sans-serif;color:#161513;font-weight:700;left:172.90px;">Number</div>
<div class="a" style="top:121.61px;font-size:12.05px;line-height:12.05px;font-family:'Liberation Sans',sans-serif;color:#161513;font-weight:700;left:262.60px;">Space Name</div>
<div class="a" style="top:107.81px;font-size:12.05px;line-height:12.05px;font-family:'Liberation Sans',sans-serif;color:#161513;font-weight:700;left:412.60px;">Occupancy</div>
<div class="a" style="top:121.61px;font-size:12.05px;line-height:12.05px;font-family:'Liberation Sans',sans-serif;color:#161513;font-weight:700;left:412.60px;">Status</div>
<div class="a" style="top:121.61px;font-size:12.05px;line-height:12.05px;font-family:'Liberation Sans',sans-serif;color:#161513;font-weight:700;left:532.60px;">Space Type</div>
<div class="a" style="top:107.81px;font-size:12.05px;line-height:12.05px;font-family:'Liberation Sans',sans-serif;color:#161513;font-weight:700;left:772.60px;">Unit of</div>
<div class="a" style="top:121.61px;font-size:12.05px;line-height:12.05px;font-family:'Liberation Sans',sans-serif;color:#161513;font-weight:700;left:772.60px;">Measure</div>
<div class="a" style="top:121.61px;font-size:12.05px;line-height:12.05px;font-family:'Liberation Sans',sans-serif;color:#161513;font-weight:700;right:calc(100% - 747.00px);">Area</div>
<svg class="a" style="left:240.30px;top:120.70px;" width="10.20" height="5.50" viewBox="0 0 10.200000000000045 5.5"><path d="M0 5.5H10.200000000000045L5.100000000000023 0Z" fill="#161513"/></svg>
<div class="a" style="left:17.00px;top:137.50px;width:826.00px;height:2.00px;background:#e4e4e4"></div>
<div class="a" style="left:167.00px;top:139.50px;width:1.00px;height:26.00px;background:#e8e8e8"></div>
<div class="a" style="left:257.00px;top:139.50px;width:1.00px;height:26.00px;background:#e8e8e8"></div>
<div class="a" style="left:407.70px;top:139.50px;width:1.00px;height:26.00px;background:#e8e8e8"></div>
<div class="a" style="left:527.70px;top:139.50px;width:1.00px;height:26.00px;background:#e8e8e8"></div>
<div class="a" style="left:677.70px;top:139.50px;width:1.00px;height:26.00px;background:#e8e8e8"></div>
<div class="a" style="left:767.70px;top:139.50px;width:1.00px;height:26.00px;background:#e8e8e8"></div>
<div class="a" style="left:17.00px;top:165.00px;width:826.00px;height:1.00px;background:#e8e8e8"></div>
<div class="a" style="top:147.61px;font-size:11.86px;line-height:11.86px;font-family:'Liberation Sans',sans-serif;color:#727272;-webkit-text-stroke:0.2px currentColor;font-weight:500;left:22.70px;">Floor 1</div>
<div class="a" style="top:147.61px;font-size:11.86px;line-height:11.86px;font-family:'Liberation Sans',sans-serif;color:#727272;-webkit-text-stroke:0.2px currentColor;font-weight:500;left:173.00px;">Area 100</div>
<div class="a" style="top:147.61px;font-size:11.86px;line-height:11.86px;font-family:'Liberation Sans',sans-serif;color:#727272;-webkit-text-stroke:0.2px currentColor;font-weight:500;left:262.60px;">Office Area 100</div>
<div class="a" style="top:147.61px;font-size:11.86px;line-height:11.86px;font-family:'Liberation Sans',sans-serif;color:#727272;-webkit-text-stroke:0.2px currentColor;font-weight:500;left:412.60px;">Vacant</div>
<div class="a" style="top:147.61px;font-size:11.86px;line-height:11.86px;font-family:'Liberation Sans',sans-serif;color:#727272;-webkit-text-stroke:0.2px currentColor;font-weight:500;left:532.60px;">Office</div>
<div class="a" style="top:147.61px;font-size:11.86px;line-height:11.86px;font-family:'Liberation Sans',sans-serif;color:#727272;-webkit-text-stroke:0.2px currentColor;font-weight:500;right:calc(100% - 762.00px);">2,500</div>
<div class="a" style="top:147.61px;font-size:11.86px;line-height:11.86px;font-family:'Liberation Sans',sans-serif;color:#727272;-webkit-text-stroke:0.2px currentColor;font-weight:500;left:773.30px;">Sq Ft</div>
<div class="a" style="left:167.00px;top:165.50px;width:1.00px;height:26.00px;background:#e8e8e8"></div>
<div class="a" style="left:257.00px;top:165.50px;width:1.00px;height:26.00px;background:#e8e8e8"></div>
<div class="a" style="left:407.70px;top:165.50px;width:1.00px;height:26.00px;background:#e8e8e8"></div>
<div class="a" style="left:527.70px;top:165.50px;width:1.00px;height:26.00px;background:#e8e8e8"></div>
<div class="a" style="left:677.70px;top:165.50px;width:1.00px;height:26.00px;background:#e8e8e8"></div>
<div class="a" style="left:767.70px;top:165.50px;width:1.00px;height:26.00px;background:#e8e8e8"></div>
<div class="a" style="left:17.00px;top:191.00px;width:826.00px;height:1.00px;background:#e8e8e8"></div>
<div class="a" style="top:173.61px;font-size:11.86px;line-height:11.86px;font-family:'Liberation Sans',sans-serif;color:#727272;-webkit-text-stroke:0.2px currentColor;font-weight:500;left:22.70px;">Floor 1</div>
<div class="a" style="top:173.61px;font-size:11.86px;line-height:11.86px;font-family:'Liberation Sans',sans-serif;color:#727272;-webkit-text-stroke:0.2px currentColor;font-weight:500;left:173.00px;">Area 110</div>
<div class="a" style="top:173.61px;font-size:11.86px;line-height:11.86px;font-family:'Liberation Sans',sans-serif;color:#727272;-webkit-text-stroke:0.2px currentColor;font-weight:500;left:262.60px;">Office Area 110</div>
<div class="a" style="top:173.61px;font-size:11.86px;line-height:11.86px;font-family:'Liberation Sans',sans-serif;color:#727272;-webkit-text-stroke:0.2px currentColor;font-weight:500;left:412.60px;">Occupied</div>
<div class="a" style="top:173.61px;font-size:11.86px;line-height:11.86px;font-family:'Liberation Sans',sans-serif;color:#727272;-webkit-text-stroke:0.2px currentColor;font-weight:500;left:532.60px;">Office</div>
<div class="a" style="top:173.61px;font-size:11.86px;line-height:11.86px;font-family:'Liberation Sans',sans-serif;color:#727272;-webkit-text-stroke:0.2px currentColor;font-weight:500;right:calc(100% - 762.00px);">500</div>
<div class="a" style="top:173.61px;font-size:11.86px;line-height:11.86px;font-family:'Liberation Sans',sans-serif;color:#727272;-webkit-text-stroke:0.2px currentColor;font-weight:500;left:773.30px;">Sq Ft</div>
<div class="a" style="left:167.00px;top:191.50px;width:1.00px;height:26.00px;background:#e8e8e8"></div>
<div class="a" style="left:257.00px;top:191.50px;width:1.00px;height:26.00px;background:#e8e8e8"></div>
<div class="a" style="left:407.70px;top:191.50px;width:1.00px;height:26.00px;background:#e8e8e8"></div>
<div class="a" style="left:527.70px;top:191.50px;width:1.00px;height:26.00px;background:#e8e8e8"></div>
<div class="a" style="left:677.70px;top:191.50px;width:1.00px;height:26.00px;background:#e8e8e8"></div>
<div class="a" style="left:767.70px;top:191.50px;width:1.00px;height:26.00px;background:#e8e8e8"></div>
<div class="a" style="left:17.00px;top:217.00px;width:826.00px;height:1.00px;background:#e8e8e8"></div>
<div class="a" style="top:199.61px;font-size:11.86px;line-height:11.86px;font-family:'Liberation Sans',sans-serif;color:#727272;-webkit-text-stroke:0.2px currentColor;font-weight:500;left:22.70px;">Floor 1</div>
<div class="a" style="top:199.61px;font-size:11.86px;line-height:11.86px;font-family:'Liberation Sans',sans-serif;color:#727272;-webkit-text-stroke:0.2px currentColor;font-weight:500;left:173.00px;">Area 120</div>
<div class="a" style="top:199.61px;font-size:11.86px;line-height:11.86px;font-family:'Liberation Sans',sans-serif;color:#727272;-webkit-text-stroke:0.2px currentColor;font-weight:500;left:262.60px;">Office Area 120</div>
<div class="a" style="top:199.61px;font-size:11.86px;line-height:11.86px;font-family:'Liberation Sans',sans-serif;color:#727272;-webkit-text-stroke:0.2px currentColor;font-weight:500;left:412.60px;">Occupied</div>
<div class="a" style="top:199.61px;font-size:11.86px;line-height:11.86px;font-family:'Liberation Sans',sans-serif;color:#727272;-webkit-text-stroke:0.2px currentColor;font-weight:500;left:532.60px;">Office</div>
<div class="a" style="top:199.61px;font-size:11.86px;line-height:11.86px;font-family:'Liberation Sans',sans-serif;color:#727272;-webkit-text-stroke:0.2px currentColor;font-weight:500;right:calc(100% - 762.00px);">2,600</div>
<div class="a" style="top:199.61px;font-size:11.86px;line-height:11.86px;font-family:'Liberation Sans',sans-serif;color:#727272;-webkit-text-stroke:0.2px currentColor;font-weight:500;left:773.30px;">Sq Ft</div>
<div class="a" style="left:167.00px;top:217.50px;width:1.00px;height:26.00px;background:#e8e8e8"></div>
<div class="a" style="left:257.00px;top:217.50px;width:1.00px;height:26.00px;background:#e8e8e8"></div>
<div class="a" style="left:407.70px;top:217.50px;width:1.00px;height:26.00px;background:#e8e8e8"></div>
<div class="a" style="left:527.70px;top:217.50px;width:1.00px;height:26.00px;background:#e8e8e8"></div>
<div class="a" style="left:677.70px;top:217.50px;width:1.00px;height:26.00px;background:#e8e8e8"></div>
<div class="a" style="left:767.70px;top:217.50px;width:1.00px;height:26.00px;background:#e8e8e8"></div>
<div class="a" style="left:17.00px;top:243.00px;width:826.00px;height:1.00px;background:#e8e8e8"></div>
<div class="a" style="top:225.61px;font-size:11.86px;line-height:11.86px;font-family:'Liberation Sans',sans-serif;color:#727272;-webkit-text-stroke:0.2px currentColor;font-weight:500;left:22.70px;">Floor 1</div>
<div class="a" style="top:225.61px;font-size:11.86px;line-height:11.86px;font-family:'Liberation Sans',sans-serif;color:#727272;-webkit-text-stroke:0.2px currentColor;font-weight:500;left:173.00px;">Area 130</div>
<div class="a" style="top:225.61px;font-size:11.86px;line-height:11.86px;font-family:'Liberation Sans',sans-serif;color:#727272;-webkit-text-stroke:0.2px currentColor;font-weight:500;left:262.60px;">Office Area 130</div>
<div class="a" style="top:225.61px;font-size:11.86px;line-height:11.86px;font-family:'Liberation Sans',sans-serif;color:#727272;-webkit-text-stroke:0.2px currentColor;font-weight:500;left:412.60px;">Vacant</div>
<div class="a" style="top:225.61px;font-size:11.86px;line-height:11.86px;font-family:'Liberation Sans',sans-serif;color:#727272;-webkit-text-stroke:0.2px currentColor;font-weight:500;left:532.60px;">Office</div>
<div class="a" style="top:225.61px;font-size:11.86px;line-height:11.86px;font-family:'Liberation Sans',sans-serif;color:#727272;-webkit-text-stroke:0.2px currentColor;font-weight:500;right:calc(100% - 762.00px);">1,200</div>
<div class="a" style="top:225.61px;font-size:11.86px;line-height:11.86px;font-family:'Liberation Sans',sans-serif;color:#727272;-webkit-text-stroke:0.2px currentColor;font-weight:500;left:773.30px;">Sq Ft</div>
<div class="a" style="left:167.00px;top:243.50px;width:1.00px;height:26.00px;background:#e8e8e8"></div>
<div class="a" style="left:257.00px;top:243.50px;width:1.00px;height:26.00px;background:#e8e8e8"></div>
<div class="a" style="left:407.70px;top:243.50px;width:1.00px;height:26.00px;background:#e8e8e8"></div>
<div class="a" style="left:527.70px;top:243.50px;width:1.00px;height:26.00px;background:#e8e8e8"></div>
<div class="a" style="left:677.70px;top:243.50px;width:1.00px;height:26.00px;background:#e8e8e8"></div>
<div class="a" style="left:767.70px;top:243.50px;width:1.00px;height:26.00px;background:#e8e8e8"></div>
<div class="a" style="left:17.00px;top:269.00px;width:826.00px;height:1.00px;background:#e8e8e8"></div>
<div class="a" style="top:251.61px;font-size:11.86px;line-height:11.86px;font-family:'Liberation Sans',sans-serif;color:#727272;-webkit-text-stroke:0.2px currentColor;font-weight:500;left:22.70px;">Floor 1</div>
<div class="a" style="top:251.61px;font-size:11.86px;line-height:11.86px;font-family:'Liberation Sans',sans-serif;color:#727272;-webkit-text-stroke:0.2px currentColor;font-weight:500;left:173.00px;">Area 140</div>
<div class="a" style="top:251.61px;font-size:11.86px;line-height:11.86px;font-family:'Liberation Sans',sans-serif;color:#727272;-webkit-text-stroke:0.2px currentColor;font-weight:500;left:262.60px;">Office Area 140</div>
<div class="a" style="top:251.61px;font-size:11.86px;line-height:11.86px;font-family:'Liberation Sans',sans-serif;color:#727272;-webkit-text-stroke:0.2px currentColor;font-weight:500;left:412.60px;">Vacant</div>
<div class="a" style="top:251.61px;font-size:11.86px;line-height:11.86px;font-family:'Liberation Sans',sans-serif;color:#727272;-webkit-text-stroke:0.2px currentColor;font-weight:500;left:532.60px;">Office</div>
<div class="a" style="top:251.61px;font-size:11.86px;line-height:11.86px;font-family:'Liberation Sans',sans-serif;color:#727272;-webkit-text-stroke:0.2px currentColor;font-weight:500;right:calc(100% - 762.00px);">1,200</div>
<div class="a" style="top:251.61px;font-size:11.86px;line-height:11.86px;font-family:'Liberation Sans',sans-serif;color:#727272;-webkit-text-stroke:0.2px currentColor;font-weight:500;left:773.30px;">Sq Ft</div>
</div>
<div id="w3" class="win">
<div class="a" style="top:7.00px;font-size:20.5px;line-height:20.5px;font-family:'Liberation Serif',serif;color:#161513;-webkit-text-stroke:0.3px currentColor;left:14.50px;">Level</div>
<div class="a" style="left:0.00px;top:44.50px;width:909.00px;height:30.50px;background:#f3f2f0"></div>
<svg class="a" style="left:22.00px;top:53.50px;" width="14.40" height="13.30" viewBox="0 0 14.399999999999977 13.299999999999955"><path d="M7.199999999999989 0V13.299999999999955M0 6.649999999999977H14.399999999999977" stroke="#161513" stroke-width="1.8"/></svg>
<div class="a" style="top:57.01px;font-size:10.2px;line-height:10.2px;font-family:'Liberation Sans',sans-serif;color:#161513;-webkit-text-stroke:0.2px currentColor;font-weight:500;letter-spacing:0.1px;left:46.00px;">Create</div>
<div class="a" style="top:56.01px;font-size:10.6px;line-height:10.6px;font-family:'Liberation Sans',sans-serif;color:#161513;-webkit-text-stroke:0.2px currentColor;font-weight:500;letter-spacing:0.4px;left:104.70px;">Actions</div>
<svg class="a" style="left:153.00px;top:57.00px;" width="8.00" height="5.00" viewBox="0 0 8 5"><path d="M0 0H8L4.0 5Z" fill="#161513"/></svg>
<div class="a" style="top:54.31px;font-size:11.6px;line-height:11.6px;font-family:'Liberation Sans',sans-serif;color:#161513;-webkit-text-stroke:0.2px currentColor;font-weight:500;letter-spacing:0.5px;left:191.00px;">View :</div>
<div class="a" style="left:226.50px;top:47.40px;width:102.50px;height:25.80px;border:1px solid #8a8a8a;border-radius:5px;background:#f3f2f0"></div>
<div class="a" style="top:57.01px;font-size:10.2px;line-height:10.2px;font-family:'Liberation Sans',sans-serif;color:#161513;-webkit-text-stroke:0.2px currentColor;font-weight:500;letter-spacing:0.1px;left:240.90px;">All Records</div>
<svg class="a" style="left:306.00px;top:57.00px;" width="8.00" height="5.00" viewBox="0 0 8 5"><path d="M0 0H8L4.0 5Z" fill="#161513"/></svg>
<svg class="a" style="left:333.50px;top:52.00px;" width="16.50" height="16.50" viewBox="0 0 24 24"><path d="M1.8 22.2L3.2 16.6L18.4 1.4L22.6 5.6L7.4 20.8Z M15.6 4.2L19.8 8.4" stroke="#161513" stroke-width="2.3" fill="none" stroke-linejoin="miter"/></svg>
<svg class="a" style="left:359.50px;top:52.00px;" width="16.50" height="16.50" viewBox="0 0 24 24"><path d="M15.8 19.5A8.3 8.3 0 1 1 20.3 11.6" stroke="#161513" stroke-width="2.5" fill="none"/><path d="M15.6 11.4H24.2L19.7 16.8Z" fill="#161513"/></svg>
<svg class="a" style="left:392.00px;top:51.50px;" width="17.00" height="17.00" viewBox="0 0 24 24"><path d="M6 9V3H18V9" stroke="#161513" stroke-width="2.2" fill="none"/><rect x="2" y="9" width="20" height="9" rx="2" stroke="#161513" stroke-width="2.2" fill="none"/><rect x="6.5" y="14" width="11" height="7.5" stroke="#161513" stroke-width="2.2" fill="#fff"/></svg>
<svg class="a" style="left:419.00px;top:57.00px;" width="8.40" height="5.00" viewBox="0 0 8.399999999999977 5"><path d="M0 0H8.399999999999977L4.199999999999989 5Z" fill="#161513"/></svg>
<svg class="a" style="left:443.50px;top:52.00px;" width="16.50" height="16.50" viewBox="0 0 24 24"><circle cx="10" cy="10" r="7.2" stroke="#161513" stroke-width="2.6" fill="none"/><path d="M15.3 15.3L21.8 21.8" stroke="#161513" stroke-width="2.8"/></svg>
<svg class="a" style="left:470.00px;top:52.50px;" width="17.00" height="17.00" viewBox="0 0 24 24"><path d="M1 2.5H22M1 8H22M1 13.8H8.5M1 19.8H8.5" stroke="#161513" stroke-width="2.7"/><circle cx="15.3" cy="16" r="3.6" stroke="#161513" stroke-width="2.6" fill="none"/><path d="M18 18.7L21.2 22" stroke="#161513" stroke-width="2.7"/></svg>
<svg class="a" style="left:497.50px;top:51.50px;" width="16.50" height="16.50" viewBox="0 0 24 24"><circle cx="12" cy="12" r="10.2" stroke="#161513" stroke-width="2.5" fill="none"/><path d="M8.7 9.3A3.4 3.4 0 1 1 13.2 12.5C12.3 12.9 12 13.5 12 14.6V15.2" stroke="#161513" stroke-width="2.6" fill="none"/><circle cx="12" cy="18.4" r="1.6" fill="#161513"/></svg>
<div class="a" style="left:19.90px;top:75.00px;width:1.00px;height:152.00px;background:#e6e6e6"></div>
<div class="a" style="top:101.81px;font-size:10.2px;line-height:10.2px;font-family:'Liberation Sans',sans-serif;color:#161513;font-weight:700;left:24.50px;">Status</div>
<div class="a" style="top:101.81px;font-size:10.2px;line-height:10.2px;font-family:'Liberation Sans',sans-serif;color:#161513;font-weight:700;right:calc(100% - 156.40px);">Level Code</div>
<svg class="a" style="left:158.60px;top:100.00px;" width="8.90" height="5.60" viewBox="0 0 8.899999999999977 5.600000000000023"><path d="M0 5.600000000000023H8.899999999999977L4.449999999999989 0Z" fill="#161513"/></svg>
<div class="a" style="top:101.81px;font-size:10.2px;line-height:10.2px;font-family:'Liberation Sans',sans-serif;color:#161513;font-weight:700;left:178.00px;">Level Name</div>
<div class="a" style="top:89.81px;font-size:10.2px;line-height:10.2px;font-family:'Liberation Sans',sans-serif;color:#161513;font-weight:700;right:calc(100% - 496.50px);">Boundary Area</div>
<div class="a" style="top:101.81px;font-size:10.2px;line-height:10.2px;font-family:'Liberation Sans',sans-serif;color:#161513;font-weight:700;right:calc(100% - 496.50px);">(PMS2)</div>
<div class="a" style="top:89.81px;font-size:10.2px;line-height:10.2px;font-family:'Liberation Sans',sans-serif;color:#161513;font-weight:700;left:518.40px;">Unit of</div>
<div class="a" style="top:101.81px;font-size:10.2px;line-height:10.2px;font-family:'Liberation Sans',sans-serif;color:#161513;font-weight:700;left:518.40px;">Measure</div>
<div class="a" style="top:101.81px;font-size:10.2px;line-height:10.2px;font-family:'Liberation Sans',sans-serif;color:#161513;font-weight:700;right:calc(100% - 700.80px);">Floor R/U Ratio</div>
<div class="a" style="top:89.81px;font-size:10.2px;line-height:10.2px;font-family:'Liberation Sans',sans-serif;color:#161513;font-weight:700;right:calc(100% - 776.80px);">Stack Plan</div>
<div class="a" style="top:101.81px;font-size:10.2px;line-height:10.2px;font-family:'Liberation Sans',sans-serif;color:#161513;font-weight:700;right:calc(100% - 776.80px);">Order</div>
<div class="a" style="top:101.81px;font-size:10.2px;line-height:10.2px;font-family:'Liberation Sans',sans-serif;color:#161513;font-weight:700;left:798.70px;">Creator</div>
<div class="a" style="left:20.00px;top:114.60px;width:889.00px;height:2.00px;background:#e4e4e4"></div>
<div class="a" style="left:97.10px;top:116.60px;width:1.00px;height:22.00px;background:#e8e8e8"></div>
<div class="a" style="left:173.70px;top:116.60px;width:1.00px;height:22.00px;background:#e8e8e8"></div>
<div class="a" style="left:386.40px;top:116.60px;width:1.00px;height:22.00px;background:#e8e8e8"></div>
<div class="a" style="left:514.30px;top:116.60px;width:1.00px;height:22.00px;background:#e8e8e8"></div>
<div class="a" style="left:590.70px;top:116.60px;width:1.00px;height:22.00px;background:#e8e8e8"></div>
<div class="a" style="left:718.70px;top:116.60px;width:1.00px;height:22.00px;background:#e8e8e8"></div>
<div class="a" style="left:794.70px;top:116.60px;width:1.00px;height:22.00px;background:#e8e8e8"></div>
<div class="a" style="left:20.00px;top:138.10px;width:889.00px;height:1.00px;background:#e8e8e8"></div>
<div class="a" style="top:122.31px;font-size:10.5px;line-height:10.5px;font-family:'Liberation Sans',sans-serif;color:#727272;-webkit-text-stroke:0.2px currentColor;font-weight:500;left:24.50px;">Vacant</div>
<div class="a" style="top:122.31px;font-size:10.5px;line-height:10.5px;font-family:'Liberation Sans',sans-serif;color:#727272;-webkit-text-stroke:0.2px currentColor;font-weight:500;right:calc(100% - 168.30px);">-1</div>
<div class="a" style="top:122.31px;font-size:10.5px;line-height:10.5px;font-family:'Liberation Sans',sans-serif;color:#727272;-webkit-text-stroke:0.2px currentColor;font-weight:500;left:178.00px;">Basement</div>
<div class="a" style="top:122.31px;font-size:10.5px;line-height:10.5px;font-family:'Liberation Sans',sans-serif;color:#727272;-webkit-text-stroke:0.2px currentColor;font-weight:500;right:calc(100% - 508.70px);">10,500.00</div>
<div class="a" style="top:122.31px;font-size:10.5px;line-height:10.5px;font-family:'Liberation Sans',sans-serif;color:#727272;-webkit-text-stroke:0.2px currentColor;font-weight:500;left:518.40px;">Sq Ft</div>
<div class="a" style="top:122.31px;font-size:10.5px;line-height:10.5px;font-family:'Liberation Sans',sans-serif;color:#727272;-webkit-text-stroke:0.2px currentColor;font-weight:500;right:calc(100% - 713.40px);">0.00</div>
<div class="a" style="top:122.31px;font-size:10.5px;line-height:10.5px;font-family:'Liberation Sans',sans-serif;color:#727272;-webkit-text-stroke:0.2px currentColor;font-weight:500;right:calc(100% - 788.60px);">-1</div>
<div class="a" style="top:122.31px;font-size:10.5px;line-height:10.5px;font-family:'Liberation Sans',sans-serif;color:#727272;-webkit-text-stroke:0.2px currentColor;font-weight:500;left:799.20px;">Company Administra...</div>
<div class="a" style="left:97.10px;top:138.63px;width:1.00px;height:22.00px;background:#e8e8e8"></div>
<div class="a" style="left:173.70px;top:138.63px;width:1.00px;height:22.00px;background:#e8e8e8"></div>
<div class="a" style="left:386.40px;top:138.63px;width:1.00px;height:22.00px;background:#e8e8e8"></div>
<div class="a" style="left:514.30px;top:138.63px;width:1.00px;height:22.00px;background:#e8e8e8"></div>
<div class="a" style="left:590.70px;top:138.63px;width:1.00px;height:22.00px;background:#e8e8e8"></div>
<div class="a" style="left:718.70px;top:138.63px;width:1.00px;height:22.00px;background:#e8e8e8"></div>
<div class="a" style="left:794.70px;top:138.63px;width:1.00px;height:22.00px;background:#e8e8e8"></div>
<div class="a" style="left:20.00px;top:160.13px;width:889.00px;height:1.00px;background:#e8e8e8"></div>
<div class="a" style="top:144.47px;font-size:10.5px;line-height:10.5px;font-family:'Liberation Sans',sans-serif;color:#727272;-webkit-text-stroke:0.2px currentColor;font-weight:500;left:24.50px;">Vacant</div>
<div class="a" style="top:144.47px;font-size:10.5px;line-height:10.5px;font-family:'Liberation Sans',sans-serif;color:#727272;-webkit-text-stroke:0.2px currentColor;font-weight:500;right:calc(100% - 168.30px);">1</div>
<div class="a" style="top:144.47px;font-size:10.5px;line-height:10.5px;font-family:'Liberation Sans',sans-serif;color:#727272;-webkit-text-stroke:0.2px currentColor;font-weight:500;left:178.00px;">Floor 1</div>
<div class="a" style="top:144.47px;font-size:10.5px;line-height:10.5px;font-family:'Liberation Sans',sans-serif;color:#727272;-webkit-text-stroke:0.2px currentColor;font-weight:500;right:calc(100% - 508.70px);">10,500.00</div>
<div class="a" style="top:144.47px;font-size:10.5px;line-height:10.5px;font-family:'Liberation Sans',sans-serif;color:#727272;-webkit-text-stroke:0.2px currentColor;font-weight:500;left:518.40px;">Sq Ft</div>
<div class="a" style="top:144.47px;font-size:10.5px;line-height:10.5px;font-family:'Liberation Sans',sans-serif;color:#727272;-webkit-text-stroke:0.2px currentColor;font-weight:500;right:calc(100% - 713.40px);">1.25</div>
<div class="a" style="top:144.47px;font-size:10.5px;line-height:10.5px;font-family:'Liberation Sans',sans-serif;color:#727272;-webkit-text-stroke:0.2px currentColor;font-weight:500;right:calc(100% - 788.60px);">1</div>
<div class="a" style="top:144.47px;font-size:10.5px;line-height:10.5px;font-family:'Liberation Sans',sans-serif;color:#727272;-webkit-text-stroke:0.2px currentColor;font-weight:500;left:799.20px;">Company Administra...</div>
<div class="a" style="left:97.10px;top:160.66px;width:1.00px;height:22.00px;background:#e8e8e8"></div>
<div class="a" style="left:173.70px;top:160.66px;width:1.00px;height:22.00px;background:#e8e8e8"></div>
<div class="a" style="left:386.40px;top:160.66px;width:1.00px;height:22.00px;background:#e8e8e8"></div>
<div class="a" style="left:514.30px;top:160.66px;width:1.00px;height:22.00px;background:#e8e8e8"></div>
<div class="a" style="left:590.70px;top:160.66px;width:1.00px;height:22.00px;background:#e8e8e8"></div>
<div class="a" style="left:718.70px;top:160.66px;width:1.00px;height:22.00px;background:#e8e8e8"></div>
<div class="a" style="left:794.70px;top:160.66px;width:1.00px;height:22.00px;background:#e8e8e8"></div>
<div class="a" style="left:20.00px;top:182.16px;width:889.00px;height:1.00px;background:#e8e8e8"></div>
<div class="a" style="top:166.64px;font-size:10.5px;line-height:10.5px;font-family:'Liberation Sans',sans-serif;color:#727272;-webkit-text-stroke:0.2px currentColor;font-weight:500;left:24.50px;">Occupied</div>
<div class="a" style="top:166.64px;font-size:10.5px;line-height:10.5px;font-family:'Liberation Sans',sans-serif;color:#727272;-webkit-text-stroke:0.2px currentColor;font-weight:500;right:calc(100% - 168.30px);">2</div>
<div class="a" style="top:166.64px;font-size:10.5px;line-height:10.5px;font-family:'Liberation Sans',sans-serif;color:#727272;-webkit-text-stroke:0.2px currentColor;font-weight:500;left:178.00px;">Floor 2</div>
<div class="a" style="top:166.64px;font-size:10.5px;line-height:10.5px;font-family:'Liberation Sans',sans-serif;color:#727272;-webkit-text-stroke:0.2px currentColor;font-weight:500;right:calc(100% - 508.70px);">10,000.00</div>
<div class="a" style="top:166.64px;font-size:10.5px;line-height:10.5px;font-family:'Liberation Sans',sans-serif;color:#727272;-webkit-text-stroke:0.2px currentColor;font-weight:500;left:518.40px;">Sq Ft</div>
<div class="a" style="top:166.64px;font-size:10.5px;line-height:10.5px;font-family:'Liberation Sans',sans-serif;color:#727272;-webkit-text-stroke:0.2px currentColor;font-weight:500;right:calc(100% - 713.40px);">1.29</div>
<div class="a" style="top:166.64px;font-size:10.5px;line-height:10.5px;font-family:'Liberation Sans',sans-serif;color:#727272;-webkit-text-stroke:0.2px currentColor;font-weight:500;right:calc(100% - 788.60px);">2</div>
<div class="a" style="top:166.64px;font-size:10.5px;line-height:10.5px;font-family:'Liberation Sans',sans-serif;color:#727272;-webkit-text-stroke:0.2px currentColor;font-weight:500;left:799.20px;">Company Administra...</div>
<div class="a" style="left:97.10px;top:182.69px;width:1.00px;height:22.00px;background:#e8e8e8"></div>
<div class="a" style="left:173.70px;top:182.69px;width:1.00px;height:22.00px;background:#e8e8e8"></div>
<div class="a" style="left:386.40px;top:182.69px;width:1.00px;height:22.00px;background:#e8e8e8"></div>
<div class="a" style="left:514.30px;top:182.69px;width:1.00px;height:22.00px;background:#e8e8e8"></div>
<div class="a" style="left:590.70px;top:182.69px;width:1.00px;height:22.00px;background:#e8e8e8"></div>
<div class="a" style="left:718.70px;top:182.69px;width:1.00px;height:22.00px;background:#e8e8e8"></div>
<div class="a" style="left:794.70px;top:182.69px;width:1.00px;height:22.00px;background:#e8e8e8"></div>
<div class="a" style="left:20.00px;top:204.19px;width:889.00px;height:1.00px;background:#e8e8e8"></div>
<div class="a" style="top:188.83px;font-size:10.5px;line-height:10.5px;font-family:'Liberation Sans',sans-serif;color:#727272;-webkit-text-stroke:0.2px currentColor;font-weight:500;left:24.50px;">Vacant</div>
<div class="a" style="top:188.83px;font-size:10.5px;line-height:10.5px;font-family:'Liberation Sans',sans-serif;color:#727272;-webkit-text-stroke:0.2px currentColor;font-weight:500;right:calc(100% - 168.30px);">3</div>
<div class="a" style="top:188.83px;font-size:10.5px;line-height:10.5px;font-family:'Liberation Sans',sans-serif;color:#727272;-webkit-text-stroke:0.2px currentColor;font-weight:500;left:178.00px;">Floor 3</div>
<div class="a" style="top:188.83px;font-size:10.5px;line-height:10.5px;font-family:'Liberation Sans',sans-serif;color:#727272;-webkit-text-stroke:0.2px currentColor;font-weight:500;right:calc(100% - 508.70px);">10,000.00</div>
<div class="a" style="top:188.83px;font-size:10.5px;line-height:10.5px;font-family:'Liberation Sans',sans-serif;color:#727272;-webkit-text-stroke:0.2px currentColor;font-weight:500;left:518.40px;">Sq Ft</div>
<div class="a" style="top:188.83px;font-size:10.5px;line-height:10.5px;font-family:'Liberation Sans',sans-serif;color:#727272;-webkit-text-stroke:0.2px currentColor;font-weight:500;right:calc(100% - 713.40px);">1.22</div>
<div class="a" style="top:188.83px;font-size:10.5px;line-height:10.5px;font-family:'Liberation Sans',sans-serif;color:#727272;-webkit-text-stroke:0.2px currentColor;font-weight:500;right:calc(100% - 788.60px);">3</div>
<div class="a" style="top:188.83px;font-size:10.5px;line-height:10.5px;font-family:'Liberation Sans',sans-serif;color:#727272;-webkit-text-stroke:0.2px currentColor;font-weight:500;left:799.20px;">Company Administra...</div>
</div>
</body></html>
